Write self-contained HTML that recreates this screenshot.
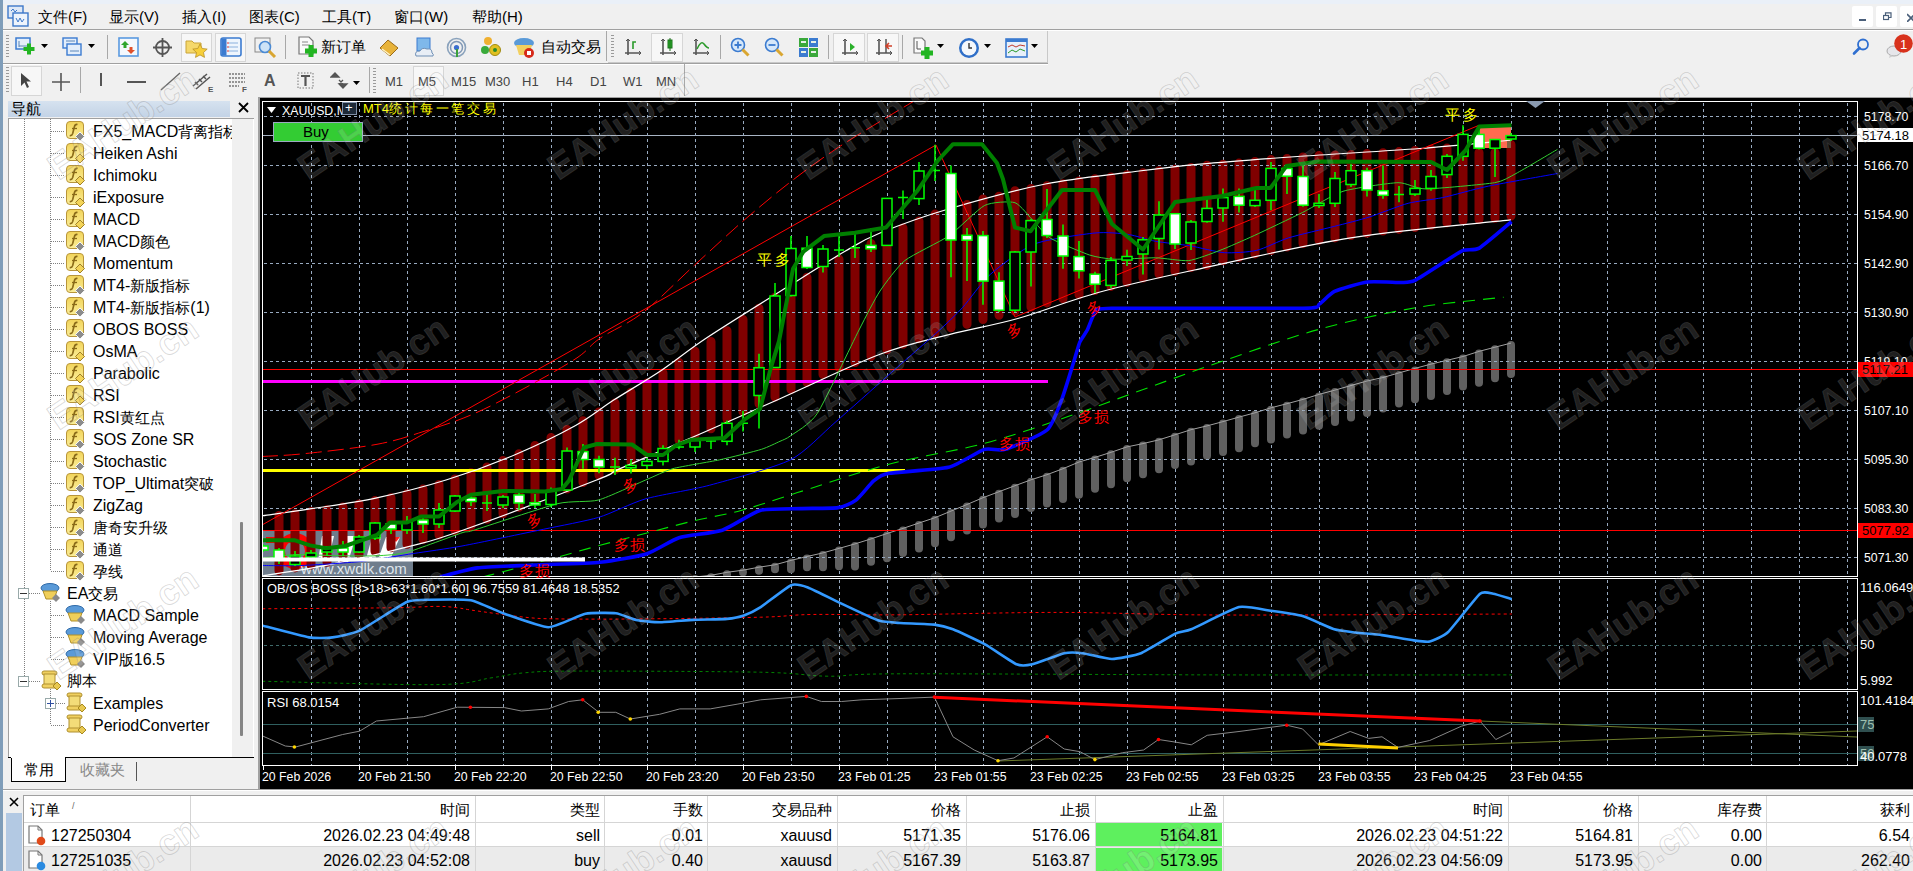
<!DOCTYPE html>
<html><head><meta charset="utf-8"><style>
*{margin:0;padding:0;box-sizing:border-box}
html,body{width:1913px;height:871px;overflow:hidden;background:#f0f0f0;font-family:"Liberation Sans", sans-serif;position:relative}
.a{position:absolute}
.t{position:absolute;white-space:nowrap;line-height:1}
</style></head>
<body>
<div class="a" style="left:0px;top:0px;width:1913px;height:4px;background:#eaf0f8"></div>
<div class="a" style="left:0px;top:0px;width:3px;height:871px;background:#7f9db9"></div>
<div class="a" style="left:3px;top:29px;width:1910px;height:1px;background:#a0a0a0"></div>
<div class="a" style="left:3px;top:30px;width:1910px;height:1px;background:#ffffff"></div>
<svg class="a" style="left:7px;top:5px" width="22" height="22" viewBox="0 0 22 22"><rect x="1" y="1" width="15" height="12" fill="#dfe9f7" stroke="#3d78c9" stroke-width="1.4"/><rect x="6" y="8" width="15" height="13" fill="#eef4fc" stroke="#3d78c9" stroke-width="1.4"/><path d="M4 6 l2 -2 l2 3 l2 -2 M9 13 l2 4 l2 -4 l2 4 l2-3" stroke="#3d78c9" stroke-width="1" fill="none"/></svg>
<div class="t" style="left:38px;top:9px;font-size:15px;color:#000;">文件(F)</div>
<div class="t" style="left:109px;top:9px;font-size:15px;color:#000;">显示(V)</div>
<div class="t" style="left:182px;top:9px;font-size:15px;color:#000;">插入(I)</div>
<div class="t" style="left:249px;top:9px;font-size:15px;color:#000;">图表(C)</div>
<div class="t" style="left:322px;top:9px;font-size:15px;color:#000;">工具(T)</div>
<div class="t" style="left:394px;top:9px;font-size:15px;color:#000;">窗口(W)</div>
<div class="t" style="left:472px;top:9px;font-size:15px;color:#000;">帮助(H)</div>
<div class="a" style="left:1852px;top:6px;width:21px;height:21px;background:#fff;border-radius:2px"></div>
<div class="a" style="left:1876px;top:6px;width:21px;height:21px;background:#fff;border-radius:2px"></div>
<div class="a" style="left:1900px;top:6px;width:21px;height:21px;background:#fff;border-radius:2px"></div>
<div class="a" style="left:1859px;top:19px;width:7px;height:2px;background:#4a5f7a"></div>
<svg class="a" style="left:1883px;top:12px" width="9" height="9"><rect x="0.5" y="3.5" width="5" height="4" fill="none" stroke="#4a5f7a" stroke-width="1.2"/><path d="M2.5 3.5 V0.8 H8 V5.5 H5.5" fill="none" stroke="#4a5f7a" stroke-width="1.2"/></svg>
<svg class="a" style="left:1907px;top:13px" width="6" height="9"><path d="M0 1 L8 9 M8 1 L0 9" stroke="#4a5f7a" stroke-width="1.6"/></svg>
<div class="a" style="left:3px;top:63px;width:1045px;height:1px;background:#a0a0a0"></div>
<div class="a" style="left:3px;top:64px;width:1045px;height:1px;background:#ffffff"></div>
<div class="a" style="left:260px;top:97px;width:1653px;height:1px;background:#a0a0a0"></div>
<div class="a" style="left:608px;top:31px;width:440px;height:32px;border:1px solid #c8c8c8;border-left:none;border-top:none"></div>
<div class="a" style="left:6px;top:35px;width:3px;height:24px;background:repeating-linear-gradient(#9a9a9a 0 1px,transparent 1px 3px)"></div>
<svg class="a" style="left:15px;top:37px" width="22" height="19" viewBox="0 0 22 19"><rect x="1" y="1" width="14" height="11" fill="#e3eefb" stroke="#3b7bd0" stroke-width="1.5"/><path d="M4 4 v6 M4 9 h8" stroke="#5b86b8" stroke-width="1"/><rect x="8.5" y="10.0" width="11" height="4" fill="#22b522"/><rect x="12.0" y="6.5" width="4" height="11" fill="#22b522"/></svg>
<svg class="a" style="left:41px;top:44px" width="8" height="5" viewBox="0 0 8 5"><path d="M0 0 H7 L3.5 4 Z" fill="#000"/></svg>
<svg class="a" style="left:62px;top:37px" width="22" height="20" viewBox="0 0 22 20"><rect x="1" y="1" width="14" height="10" fill="#e3eefb" stroke="#3b7bd0" stroke-width="1.4"/><rect x="5" y="7" width="14" height="11" fill="#e3eefb" stroke="#3b7bd0" stroke-width="1.4"/><path d="M4 4 h9 M8 14 h9" stroke="#5b86b8"/></svg>
<svg class="a" style="left:88px;top:44px" width="8" height="5" viewBox="0 0 8 5"><path d="M0 0 H7 L3.5 4 Z" fill="#000"/></svg>
<div class="a" style="left:107px;top:35px;width:1px;height:24px;background:#a8a8a8"></div>
<svg class="a" style="left:118px;top:37px" width="22" height="21" viewBox="0 0 22 21"><rect x="1" y="1" width="19" height="18" fill="#f4f8fd" stroke="#5a9ae0" stroke-width="1.6"/><path d="M7 4 l4 4 h-2.5 v3 h-3 v-3 H3 Z" fill="#2ea52e"/><path d="M13 17 l4 -4 h-2.5 v-3 h-3 v3 H9 Z" fill="#e0502a"/></svg>
<svg class="a" style="left:152px;top:37px" width="21" height="21" viewBox="0 0 21 21"><circle cx="10.5" cy="10.5" r="6.5" fill="none" stroke="#555" stroke-width="1.8"/><path d="M10.5 1 v19 M1 10.5 h19" stroke="#555" stroke-width="1.8"/></svg>
<div class="a" style="left:181px;top:33px;width:31px;height:29px;background:#f7f7f7;border:1px solid #d6d6d6"></div>
<svg class="a" style="left:185px;top:37px" width="23" height="21" viewBox="0 0 23 21"><path d="M1 4 h6 l2 2 h7 v10 H1 Z" fill="#f5d86b" stroke="#c9a43a"/><path d="M15 7 l2.2 4.5 5 .6 -3.7 3.4 1 4.9 -4.5 -2.5 -4.5 2.5 1 -4.9 -3.7 -3.4 5 -.6 Z" fill="#f7cf3a" stroke="#b8902a" stroke-width=".8"/></svg>
<div class="a" style="left:215px;top:33px;width:31px;height:29px;background:#f7f7f7;border:1px solid #d6d6d6"></div>
<svg class="a" style="left:220px;top:37px" width="22" height="20" viewBox="0 0 22 20"><rect x="1" y="1" width="20" height="18" rx="2" fill="#eef5fd" stroke="#3b7bd0" stroke-width="1.6"/><rect x="1.5" y="1.5" width="5" height="17" fill="#3b7bd0"/><path d="M9 6 h9 M9 10 h9 M9 14 h9" stroke="#8ab0dd"/><path d="M7 6 h2 M7 10 h2 M7 14 h2" stroke="#d33"/></svg>
<svg class="a" style="left:254px;top:37px" width="23" height="21" viewBox="0 0 23 21"><rect x="1" y="1" width="15" height="14" fill="#f0f0f0" stroke="#888"/><circle cx="11" cy="10" r="5.5" fill="#cde3f7" stroke="#4a8ad4" stroke-width="1.6"/><path d="M15 14 l6 6" stroke="#d9a631" stroke-width="3"/></svg>
<div class="a" style="left:285px;top:35px;width:1px;height:24px;background:#a8a8a8"></div>
<svg class="a" style="left:297px;top:36px" width="22" height="23" viewBox="0 0 22 23"><path d="M2 1 h10 l4 4 v13 H2 Z" fill="#fafafa" stroke="#777" stroke-width="1.2"/><path d="M5 6 h6 M5 9 h8" stroke="#888"/><rect x="8.0" y="12.5" width="12" height="5" fill="#22b522"/><rect x="11.5" y="9.0" width="5" height="12" fill="#22b522"/></svg>
<div class="t" style="left:321px;top:39px;font-size:15px;color:#000;">新订单</div>
<svg class="a" style="left:378px;top:38px" width="22" height="19" viewBox="0 0 22 19"><path d="M2 10 L10 2 L20 10 L12 18 Z" fill="#e8b33a" stroke="#9a6b1a"/><path d="M4 11 L12 17" stroke="#fff3c4" stroke-width="1.5"/></svg>
<svg class="a" style="left:413px;top:37px" width="22" height="21" viewBox="0 0 22 21"><rect x="4" y="1" width="13" height="13" fill="#7fb8ea" stroke="#3b7bd0"/><path d="M3 19 q-2 -5 4 -5 q2 -4 7 -2 q5 -1 5 4 q2 1 1 3 Z" fill="#e8eef6" stroke="#6e8fb5"/></svg>
<svg class="a" style="left:446px;top:37px" width="21" height="21" viewBox="0 0 21 21"><circle cx="10.5" cy="10.5" r="9" fill="none" stroke="#8aa2bc" stroke-width="1.6"/><circle cx="10.5" cy="10.5" r="6" fill="none" stroke="#7f97b5" stroke-width="1.5"/><circle cx="10.5" cy="10.5" r="2.6" fill="#3b6fcf"/><path d="M11 12 v8" stroke="#3aa03a" stroke-width="2"/></svg>
<svg class="a" style="left:480px;top:36px" width="22" height="23" viewBox="0 0 22 23"><circle cx="8" cy="5" r="4" fill="#f0b030"/><circle cx="5" cy="14" r="4" fill="#3aaa3a"/><circle cx="15" cy="14" r="5.5" fill="#e0c020" stroke="#a08a10"/><circle cx="15" cy="14" r="2" fill="#2a8a2a"/></svg>
<svg class="a" style="left:513px;top:36px" width="23" height="23" viewBox="0 0 23 23"><ellipse cx="11" cy="7" rx="10" ry="5" fill="#5a9ad8"/><path d="M3 9 h16 l-3 10 h-10 Z" fill="#f2d060"/><circle cx="16" cy="17" r="5" fill="#d62a1a"/><rect x="14" y="15" width="4" height="4" fill="#fff"/></svg>
<div class="t" style="left:541px;top:39px;font-size:15px;color:#000;">自动交易</div>
<div class="a" style="left:606px;top:31px;width:1px;height:30px;background:#a8a8a8"></div>
<div class="a" style="left:611px;top:35px;width:3px;height:24px;background:repeating-linear-gradient(#9a9a9a 0 1px,transparent 1px 3px)"></div>
<svg class="a" style="left:624px;top:37px" width="20" height="20" viewBox="0 0 20 20"><path d="M4 2 v16 M1 16 h16" stroke="#555" stroke-width="1.6"/><path d="M2 4 l2-2 2 2 M15 14 l2 2 -2 2" stroke="#555" fill="none"/><path d="M9 12 v-7 h3" stroke="#2a9a2a" stroke-width="1.6" fill="none"/></svg>
<div class="a" style="left:651px;top:33px;width:32px;height:29px;background:#f7f7f7;border:1px solid #d6d6d6"></div>
<svg class="a" style="left:659px;top:37px" width="20" height="20" viewBox="0 0 20 20"><path d="M4 2 v16 M1 16 h16" stroke="#555" stroke-width="1.6"/><path d="M2 4 l2-2 2 2 M15 14 l2 2 -2 2" stroke="#555" fill="none"/><rect x="9" y="3" width="4" height="8" fill="#2ab02a" stroke="#1a701a"/><path d="M11 1 v13" stroke="#1a701a"/></svg>
<svg class="a" style="left:692px;top:37px" width="20" height="20" viewBox="0 0 20 20"><path d="M4 2 v16 M1 16 h16" stroke="#555" stroke-width="1.6"/><path d="M2 4 l2-2 2 2 M15 14 l2 2 -2 2" stroke="#555" fill="none"/><path d="M5 12 q4 -9 7 -5 t5 4" stroke="#2a9a2a" stroke-width="1.5" fill="none"/></svg>
<div class="a" style="left:720px;top:35px;width:1px;height:24px;background:#a8a8a8"></div>
<svg class="a" style="left:730px;top:37px" width="21" height="21" viewBox="0 0 21 21"><circle cx="8" cy="8" r="6.5" fill="#d6e8fa" stroke="#3b7bd0" stroke-width="1.6"/><path d="M8 4.5 v7 M4.5 8 h7" stroke="#3b7bd0" stroke-width="1.8"/><path d="M12.5 12.5 l6 6" stroke="#d9a631" stroke-width="3"/></svg>
<svg class="a" style="left:764px;top:37px" width="21" height="21" viewBox="0 0 21 21"><circle cx="8" cy="8" r="6.5" fill="#d6e8fa" stroke="#3b7bd0" stroke-width="1.6"/><path d="M4.5 8 h7" stroke="#3b7bd0" stroke-width="1.8"/><path d="M12.5 12.5 l6 6" stroke="#d9a631" stroke-width="3"/></svg>
<svg class="a" style="left:798px;top:37px" width="22" height="21" viewBox="0 0 22 21"><rect x="1" y="1" width="9" height="9" fill="#3aa83a"/><rect x="11" y="1" width="9" height="9" fill="#3b7bd0"/><rect x="1" y="11" width="9" height="9" fill="#3b7bd0"/><rect x="11" y="11" width="9" height="9" fill="#3aa83a"/><path d="M3 5 h5 M13 5 h5 M3 15 h5 M13 15 h5" stroke="#e6f0e6" stroke-width="2"/></svg>
<div class="a" style="left:828px;top:35px;width:1px;height:24px;background:#a8a8a8"></div>
<div class="a" style="left:833px;top:33px;width:32px;height:29px;background:#f7f7f7;border:1px solid #d6d6d6"></div>
<svg class="a" style="left:841px;top:37px" width="20" height="20" viewBox="0 0 20 20"><path d="M4 2 v16 M1 16 h16" stroke="#555" stroke-width="1.6"/><path d="M2 4 l2-2 2 2 M15 14 l2 2 -2 2" stroke="#555" fill="none"/><path d="M9 6 l5 4 -5 4 Z" fill="#2ab02a"/></svg>
<div class="a" style="left:867px;top:33px;width:32px;height:29px;background:#f7f7f7;border:1px solid #d6d6d6"></div>
<svg class="a" style="left:875px;top:37px" width="20" height="20" viewBox="0 0 20 20"><path d="M4 2 v16 M1 16 h16" stroke="#555" stroke-width="1.6"/><path d="M2 4 l2-2 2 2 M15 14 l2 2 -2 2" stroke="#555" fill="none"/><path d="M11 2 v14" stroke="#555" stroke-width="1.5"/><path d="M17 9 h-5 M14 6 l-3 3 3 3" stroke="#d0402a" stroke-width="1.6" fill="none"/></svg>
<div class="a" style="left:902px;top:35px;width:1px;height:24px;background:#a8a8a8"></div>
<svg class="a" style="left:912px;top:37px" width="22" height="23" viewBox="0 0 22 23"><path d="M2 1 h8 l3 3 v12 H2 Z" fill="#fafafa" stroke="#777" stroke-width="1.2"/><path d="M5 4 v8 h4" stroke="#555" fill="none"/><rect x="9.0" y="13.5" width="12" height="5" fill="#22b522"/><rect x="12.5" y="10.0" width="5" height="12" fill="#22b522"/></svg>
<svg class="a" style="left:937px;top:44px" width="8" height="5" viewBox="0 0 8 5"><path d="M0 0 H7 L3.5 4 Z" fill="#000"/></svg>
<svg class="a" style="left:958px;top:37px" width="22" height="22" viewBox="0 0 22 22"><circle cx="11" cy="11" r="10" fill="#2f6fc8"/><circle cx="11" cy="11" r="7.5" fill="#f4f7fb"/><path d="M11 6 v5 h3" stroke="#333" stroke-width="1.4" fill="none"/></svg>
<svg class="a" style="left:984px;top:44px" width="8" height="5" viewBox="0 0 8 5"><path d="M0 0 H7 L3.5 4 Z" fill="#000"/></svg>
<svg class="a" style="left:1005px;top:38px" width="23" height="20" viewBox="0 0 23 20"><rect x="1" y="1" width="21" height="18" fill="#e8f0fa" stroke="#3b7bd0" stroke-width="1.6"/><rect x="1" y="1" width="21" height="3" fill="#3b7bd0"/><path d="M3 9 l4-2 4 2 4-2 5 1" stroke="#c0392b" fill="none"/><path d="M3 15 l4-3 4 2 4-3 5 2" stroke="#2a9a2a" fill="none"/></svg>
<svg class="a" style="left:1031px;top:44px" width="8" height="5" viewBox="0 0 8 5"><path d="M0 0 H7 L3.5 4 Z" fill="#000"/></svg>
<svg class="a" style="left:1852px;top:37px" width="20" height="20" viewBox="0 0 20 20"><circle cx="11" cy="7.5" r="5" fill="none" stroke="#2f6fd0" stroke-width="1.8"/><path d="M7.5 11 L2 16.5" stroke="#2f6fd0" stroke-width="2.6" stroke-linecap="round"/></svg>
<svg class="a" style="left:1885px;top:34px" width="28" height="26" viewBox="0 0 28 26"><ellipse cx="9" cy="17" rx="7" ry="5" fill="#e6e6ea" stroke="#aaa"/><path d="M5 21 l-1 3 4 -2" fill="#ccc"/><circle cx="18.5" cy="9.5" r="9.3" fill="#d8321c"/><text x="18.5" y="14.5" fill="#fff" font-size="13" font-family="Liberation Sans" text-anchor="middle">1</text></svg>
<div class="a" style="left:6px;top:67px;width:3px;height:26px;background:repeating-linear-gradient(#9a9a9a 0 1px,transparent 1px 3px)"></div>
<div class="a" style="left:11px;top:66px;width:31px;height:30px;background:#f7f7f7;border:1px solid #d6d6d6"></div>
<svg class="a" style="left:19px;top:72px" width="14" height="18" viewBox="0 0 14 18"><path d="M2 1 L2 14 L5.5 10.5 L8 16 L10 15 L7.5 9.5 L12 9.5 Z" fill="#444"/></svg>
<svg class="a" style="left:51px;top:72px" width="20" height="20" viewBox="0 0 20 20"><path d="M10 1 v18 M1 10 h18" stroke="#555" stroke-width="1.6"/></svg>
<div class="a" style="left:80px;top:67px;width:1px;height:26px;background:#a8a8a8"></div>
<div class="a" style="left:100px;top:73px;width:2px;height:13px;background:#555"></div>
<div class="a" style="left:127px;top:81px;width:19px;height:2px;background:#555"></div>
<svg class="a" style="left:160px;top:70px" width="25" height="22" viewBox="0 0 25 22"><path d="M1 20 L20 3" stroke="#666" stroke-width="1.3"/></svg>
<svg class="a" style="left:190px;top:70px" width="26" height="23" viewBox="0 0 26 23"><path d="M3 16 l14 -12 M6 19 l14 -12 M5 12 l3 3 M9 9 l3 3 M13 6 l3 3" stroke="#555" stroke-width="1.5"/><text x="18" y="22" font-size="8" font-weight="bold" fill="#555" font-family="Liberation Sans">E</text></svg>
<svg class="a" style="left:228px;top:72px" width="22" height="20" viewBox="0 0 22 20"><path d="M1 2 h16 M1 6 h16 M1 10 h16 M1 14 h10" stroke="#777" stroke-dasharray="2 1" stroke-width="1.5"/><text x="14" y="20" font-size="8" font-weight="bold" fill="#555" font-family="Liberation Sans">F</text></svg>
<div class="t" style="left:264px;top:73px;font-size:16px;color:#555;font-weight:bold">A</div>
<svg class="a" style="left:297px;top:72px" width="18" height="18" viewBox="0 0 18 18"><rect x="1" y="1" width="15" height="15" fill="none" stroke="#777" stroke-dasharray="1.5 1.5"/><path d="M4 4 h9 M8.5 4 v10" stroke="#555" stroke-width="2.2"/></svg>
<svg class="a" style="left:330px;top:72px" width="20" height="18" viewBox="0 0 20 18"><path d="M5 1 l4 4 h-8 Z M9 8 l4 4 M13 8 l-4 4 M13 16 l4 -4 h-8 Z" fill="#555" stroke="#555" stroke-width="1.3"/></svg>
<svg class="a" style="left:353px;top:81px" width="8" height="5" viewBox="0 0 8 5"><path d="M0 0 H7 L3.5 4 Z" fill="#000"/></svg>
<div class="a" style="left:369px;top:67px;width:1px;height:26px;background:#a8a8a8"></div>
<div class="a" style="left:373px;top:68px;width:3px;height:26px;background:repeating-linear-gradient(#9a9a9a 0 1px,transparent 1px 3px)"></div>
<div class="a" style="left:413px;top:66px;width:31px;height:30px;background:#f7f7f7;border:1px solid #d6d6d6"></div>
<div class="t" style="left:385px;top:75px;font-size:13px;color:#444;">M1</div>
<div class="t" style="left:418px;top:75px;font-size:13px;color:#444;">M5</div>
<div class="t" style="left:451px;top:75px;font-size:13px;color:#444;">M15</div>
<div class="t" style="left:485px;top:75px;font-size:13px;color:#444;">M30</div>
<div class="t" style="left:522px;top:75px;font-size:13px;color:#444;">H1</div>
<div class="t" style="left:556px;top:75px;font-size:13px;color:#444;">H4</div>
<div class="t" style="left:590px;top:75px;font-size:13px;color:#444;">D1</div>
<div class="t" style="left:623px;top:75px;font-size:13px;color:#444;">W1</div>
<div class="t" style="left:656px;top:75px;font-size:13px;color:#444;">MN</div>
<div class="a" style="left:684px;top:64px;width:1px;height:32px;background:#a8a8a8"></div>
<div class="a" style="left:3px;top:97px;width:257px;height:693px;background:#f0f0f0"></div>
<div class="a" style="left:8px;top:101px;width:222px;height:16px;background:linear-gradient(#d6e2ef,#c3d3e6)"></div>
<div class="t" style="left:11px;top:101px;font-size:15px;color:#000;">导航</div>
<svg class="a" style="left:238px;top:102px" width="11" height="11" viewBox="0 0 11 11"><path d="M1 1 L10 10 M10 1 L1 10" stroke="#000" stroke-width="1.8"/></svg>
<div class="a" style="left:8px;top:118px;width:246px;height:639px;background:#fff;border-top:1px solid #a0a0a0;border-left:1px solid #a0a0a0"></div>
<div class="a" style="left:24px;top:119px;width:1px;height:475px;background:repeating-linear-gradient(#808080 0 1px,transparent 1px 2px)"></div>
<div class="a" style="left:50px;top:119px;width:1px;height:452px;background:repeating-linear-gradient(#808080 0 1px,transparent 1px 2px)"></div>
<div class="a" style="left:51px;top:131px;width:14px;height:1px;background:repeating-linear-gradient(90deg,#808080 0 1px,transparent 1px 2px)"></div>
<svg class="a" style="left:65px;top:121px" width="21" height="21" viewBox="0 0 21 21"><defs><linearGradient id="yg" x1="0" y1="0" x2="0" y2="1"><stop offset="0" stop-color="#f2d45a"/><stop offset="1" stop-color="#fbee98"/></linearGradient></defs><rect x="1.5" y="0.5" width="17" height="17" rx="3.5" fill="url(#yg)" stroke="#b8953a"/><path d="M12.5 3.5 q-2.5 -0.5 -3.2 2.5 l-1.6 6.5 q-0.8 2.5 -3 2" fill="none" stroke="#8a6a18" stroke-width="1.6"/><path d="M7 7.5 h5" stroke="#8a6a18" stroke-width="1.3"/><path d="M15 11 l4.5 4.5 -4.5 4.5 -4.5 -4.5 Z" fill="#8c8c8c" stroke="#f4f4f4" stroke-width="1"/></svg>
<div class="t" style="left:93px;top:124px;font-size:16px;color:#000;">FX5_MACD<span style="font-size:15px">背离指标</span></div>
<div class="a" style="left:51px;top:153px;width:14px;height:1px;background:repeating-linear-gradient(90deg,#808080 0 1px,transparent 1px 2px)"></div>
<svg class="a" style="left:65px;top:143px" width="21" height="21" viewBox="0 0 21 21"><defs><linearGradient id="yg" x1="0" y1="0" x2="0" y2="1"><stop offset="0" stop-color="#f2d45a"/><stop offset="1" stop-color="#fbee98"/></linearGradient></defs><rect x="1.5" y="0.5" width="17" height="17" rx="3.5" fill="url(#yg)" stroke="#b8953a"/><path d="M12.5 3.5 q-2.5 -0.5 -3.2 2.5 l-1.6 6.5 q-0.8 2.5 -3 2" fill="none" stroke="#8a6a18" stroke-width="1.6"/><path d="M7 7.5 h5" stroke="#8a6a18" stroke-width="1.3"/><path d="M15 11 l4.5 4.5 -4.5 4.5 -4.5 -4.5 Z" fill="#f3d458" stroke="#a08028" stroke-width="1"/></svg>
<div class="t" style="left:93px;top:146px;font-size:16px;color:#000;">Heiken Ashi</div>
<div class="a" style="left:51px;top:175px;width:14px;height:1px;background:repeating-linear-gradient(90deg,#808080 0 1px,transparent 1px 2px)"></div>
<svg class="a" style="left:65px;top:165px" width="21" height="21" viewBox="0 0 21 21"><defs><linearGradient id="yg" x1="0" y1="0" x2="0" y2="1"><stop offset="0" stop-color="#f2d45a"/><stop offset="1" stop-color="#fbee98"/></linearGradient></defs><rect x="1.5" y="0.5" width="17" height="17" rx="3.5" fill="url(#yg)" stroke="#b8953a"/><path d="M12.5 3.5 q-2.5 -0.5 -3.2 2.5 l-1.6 6.5 q-0.8 2.5 -3 2" fill="none" stroke="#8a6a18" stroke-width="1.6"/><path d="M7 7.5 h5" stroke="#8a6a18" stroke-width="1.3"/><path d="M15 11 l4.5 4.5 -4.5 4.5 -4.5 -4.5 Z" fill="#f3d458" stroke="#a08028" stroke-width="1"/></svg>
<div class="t" style="left:93px;top:168px;font-size:16px;color:#000;">Ichimoku</div>
<div class="a" style="left:51px;top:197px;width:14px;height:1px;background:repeating-linear-gradient(90deg,#808080 0 1px,transparent 1px 2px)"></div>
<svg class="a" style="left:65px;top:187px" width="21" height="21" viewBox="0 0 21 21"><defs><linearGradient id="yg" x1="0" y1="0" x2="0" y2="1"><stop offset="0" stop-color="#f2d45a"/><stop offset="1" stop-color="#fbee98"/></linearGradient></defs><rect x="1.5" y="0.5" width="17" height="17" rx="3.5" fill="url(#yg)" stroke="#b8953a"/><path d="M12.5 3.5 q-2.5 -0.5 -3.2 2.5 l-1.6 6.5 q-0.8 2.5 -3 2" fill="none" stroke="#8a6a18" stroke-width="1.6"/><path d="M7 7.5 h5" stroke="#8a6a18" stroke-width="1.3"/><path d="M15 11 l4.5 4.5 -4.5 4.5 -4.5 -4.5 Z" fill="#f3d458" stroke="#a08028" stroke-width="1"/></svg>
<div class="t" style="left:93px;top:190px;font-size:16px;color:#000;">iExposure</div>
<div class="a" style="left:51px;top:219px;width:14px;height:1px;background:repeating-linear-gradient(90deg,#808080 0 1px,transparent 1px 2px)"></div>
<svg class="a" style="left:65px;top:209px" width="21" height="21" viewBox="0 0 21 21"><defs><linearGradient id="yg" x1="0" y1="0" x2="0" y2="1"><stop offset="0" stop-color="#f2d45a"/><stop offset="1" stop-color="#fbee98"/></linearGradient></defs><rect x="1.5" y="0.5" width="17" height="17" rx="3.5" fill="url(#yg)" stroke="#b8953a"/><path d="M12.5 3.5 q-2.5 -0.5 -3.2 2.5 l-1.6 6.5 q-0.8 2.5 -3 2" fill="none" stroke="#8a6a18" stroke-width="1.6"/><path d="M7 7.5 h5" stroke="#8a6a18" stroke-width="1.3"/><path d="M15 11 l4.5 4.5 -4.5 4.5 -4.5 -4.5 Z" fill="#f3d458" stroke="#a08028" stroke-width="1"/></svg>
<div class="t" style="left:93px;top:212px;font-size:16px;color:#000;">MACD</div>
<div class="a" style="left:51px;top:241px;width:14px;height:1px;background:repeating-linear-gradient(90deg,#808080 0 1px,transparent 1px 2px)"></div>
<svg class="a" style="left:65px;top:231px" width="21" height="21" viewBox="0 0 21 21"><defs><linearGradient id="yg" x1="0" y1="0" x2="0" y2="1"><stop offset="0" stop-color="#f2d45a"/><stop offset="1" stop-color="#fbee98"/></linearGradient></defs><rect x="1.5" y="0.5" width="17" height="17" rx="3.5" fill="url(#yg)" stroke="#b8953a"/><path d="M12.5 3.5 q-2.5 -0.5 -3.2 2.5 l-1.6 6.5 q-0.8 2.5 -3 2" fill="none" stroke="#8a6a18" stroke-width="1.6"/><path d="M7 7.5 h5" stroke="#8a6a18" stroke-width="1.3"/><path d="M15 11 l4.5 4.5 -4.5 4.5 -4.5 -4.5 Z" fill="#8c8c8c" stroke="#f4f4f4" stroke-width="1"/></svg>
<div class="t" style="left:93px;top:234px;font-size:16px;color:#000;">MACD<span style="font-size:15px">颜色</span></div>
<div class="a" style="left:51px;top:263px;width:14px;height:1px;background:repeating-linear-gradient(90deg,#808080 0 1px,transparent 1px 2px)"></div>
<svg class="a" style="left:65px;top:253px" width="21" height="21" viewBox="0 0 21 21"><defs><linearGradient id="yg" x1="0" y1="0" x2="0" y2="1"><stop offset="0" stop-color="#f2d45a"/><stop offset="1" stop-color="#fbee98"/></linearGradient></defs><rect x="1.5" y="0.5" width="17" height="17" rx="3.5" fill="url(#yg)" stroke="#b8953a"/><path d="M12.5 3.5 q-2.5 -0.5 -3.2 2.5 l-1.6 6.5 q-0.8 2.5 -3 2" fill="none" stroke="#8a6a18" stroke-width="1.6"/><path d="M7 7.5 h5" stroke="#8a6a18" stroke-width="1.3"/><path d="M15 11 l4.5 4.5 -4.5 4.5 -4.5 -4.5 Z" fill="#f3d458" stroke="#a08028" stroke-width="1"/></svg>
<div class="t" style="left:93px;top:256px;font-size:16px;color:#000;">Momentum</div>
<div class="a" style="left:51px;top:285px;width:14px;height:1px;background:repeating-linear-gradient(90deg,#808080 0 1px,transparent 1px 2px)"></div>
<svg class="a" style="left:65px;top:275px" width="21" height="21" viewBox="0 0 21 21"><defs><linearGradient id="yg" x1="0" y1="0" x2="0" y2="1"><stop offset="0" stop-color="#f2d45a"/><stop offset="1" stop-color="#fbee98"/></linearGradient></defs><rect x="1.5" y="0.5" width="17" height="17" rx="3.5" fill="url(#yg)" stroke="#b8953a"/><path d="M12.5 3.5 q-2.5 -0.5 -3.2 2.5 l-1.6 6.5 q-0.8 2.5 -3 2" fill="none" stroke="#8a6a18" stroke-width="1.6"/><path d="M7 7.5 h5" stroke="#8a6a18" stroke-width="1.3"/><path d="M15 11 l4.5 4.5 -4.5 4.5 -4.5 -4.5 Z" fill="#8c8c8c" stroke="#f4f4f4" stroke-width="1"/></svg>
<div class="t" style="left:93px;top:278px;font-size:16px;color:#000;">MT4-<span style="font-size:15px">新版指标</span></div>
<div class="a" style="left:51px;top:307px;width:14px;height:1px;background:repeating-linear-gradient(90deg,#808080 0 1px,transparent 1px 2px)"></div>
<svg class="a" style="left:65px;top:297px" width="21" height="21" viewBox="0 0 21 21"><defs><linearGradient id="yg" x1="0" y1="0" x2="0" y2="1"><stop offset="0" stop-color="#f2d45a"/><stop offset="1" stop-color="#fbee98"/></linearGradient></defs><rect x="1.5" y="0.5" width="17" height="17" rx="3.5" fill="url(#yg)" stroke="#b8953a"/><path d="M12.5 3.5 q-2.5 -0.5 -3.2 2.5 l-1.6 6.5 q-0.8 2.5 -3 2" fill="none" stroke="#8a6a18" stroke-width="1.6"/><path d="M7 7.5 h5" stroke="#8a6a18" stroke-width="1.3"/><path d="M15 11 l4.5 4.5 -4.5 4.5 -4.5 -4.5 Z" fill="#8c8c8c" stroke="#f4f4f4" stroke-width="1"/></svg>
<div class="t" style="left:93px;top:300px;font-size:16px;color:#000;">MT4-<span style="font-size:15px">新版指标</span>(1)</div>
<div class="a" style="left:51px;top:329px;width:14px;height:1px;background:repeating-linear-gradient(90deg,#808080 0 1px,transparent 1px 2px)"></div>
<svg class="a" style="left:65px;top:319px" width="21" height="21" viewBox="0 0 21 21"><defs><linearGradient id="yg" x1="0" y1="0" x2="0" y2="1"><stop offset="0" stop-color="#f2d45a"/><stop offset="1" stop-color="#fbee98"/></linearGradient></defs><rect x="1.5" y="0.5" width="17" height="17" rx="3.5" fill="url(#yg)" stroke="#b8953a"/><path d="M12.5 3.5 q-2.5 -0.5 -3.2 2.5 l-1.6 6.5 q-0.8 2.5 -3 2" fill="none" stroke="#8a6a18" stroke-width="1.6"/><path d="M7 7.5 h5" stroke="#8a6a18" stroke-width="1.3"/><path d="M15 11 l4.5 4.5 -4.5 4.5 -4.5 -4.5 Z" fill="#8c8c8c" stroke="#f4f4f4" stroke-width="1"/></svg>
<div class="t" style="left:93px;top:322px;font-size:16px;color:#000;">OBOS BOSS</div>
<div class="a" style="left:51px;top:351px;width:14px;height:1px;background:repeating-linear-gradient(90deg,#808080 0 1px,transparent 1px 2px)"></div>
<svg class="a" style="left:65px;top:341px" width="21" height="21" viewBox="0 0 21 21"><defs><linearGradient id="yg" x1="0" y1="0" x2="0" y2="1"><stop offset="0" stop-color="#f2d45a"/><stop offset="1" stop-color="#fbee98"/></linearGradient></defs><rect x="1.5" y="0.5" width="17" height="17" rx="3.5" fill="url(#yg)" stroke="#b8953a"/><path d="M12.5 3.5 q-2.5 -0.5 -3.2 2.5 l-1.6 6.5 q-0.8 2.5 -3 2" fill="none" stroke="#8a6a18" stroke-width="1.6"/><path d="M7 7.5 h5" stroke="#8a6a18" stroke-width="1.3"/><path d="M15 11 l4.5 4.5 -4.5 4.5 -4.5 -4.5 Z" fill="#f3d458" stroke="#a08028" stroke-width="1"/></svg>
<div class="t" style="left:93px;top:344px;font-size:16px;color:#000;">OsMA</div>
<div class="a" style="left:51px;top:373px;width:14px;height:1px;background:repeating-linear-gradient(90deg,#808080 0 1px,transparent 1px 2px)"></div>
<svg class="a" style="left:65px;top:363px" width="21" height="21" viewBox="0 0 21 21"><defs><linearGradient id="yg" x1="0" y1="0" x2="0" y2="1"><stop offset="0" stop-color="#f2d45a"/><stop offset="1" stop-color="#fbee98"/></linearGradient></defs><rect x="1.5" y="0.5" width="17" height="17" rx="3.5" fill="url(#yg)" stroke="#b8953a"/><path d="M12.5 3.5 q-2.5 -0.5 -3.2 2.5 l-1.6 6.5 q-0.8 2.5 -3 2" fill="none" stroke="#8a6a18" stroke-width="1.6"/><path d="M7 7.5 h5" stroke="#8a6a18" stroke-width="1.3"/><path d="M15 11 l4.5 4.5 -4.5 4.5 -4.5 -4.5 Z" fill="#f3d458" stroke="#a08028" stroke-width="1"/></svg>
<div class="t" style="left:93px;top:366px;font-size:16px;color:#000;">Parabolic</div>
<div class="a" style="left:51px;top:395px;width:14px;height:1px;background:repeating-linear-gradient(90deg,#808080 0 1px,transparent 1px 2px)"></div>
<svg class="a" style="left:65px;top:385px" width="21" height="21" viewBox="0 0 21 21"><defs><linearGradient id="yg" x1="0" y1="0" x2="0" y2="1"><stop offset="0" stop-color="#f2d45a"/><stop offset="1" stop-color="#fbee98"/></linearGradient></defs><rect x="1.5" y="0.5" width="17" height="17" rx="3.5" fill="url(#yg)" stroke="#b8953a"/><path d="M12.5 3.5 q-2.5 -0.5 -3.2 2.5 l-1.6 6.5 q-0.8 2.5 -3 2" fill="none" stroke="#8a6a18" stroke-width="1.6"/><path d="M7 7.5 h5" stroke="#8a6a18" stroke-width="1.3"/><path d="M15 11 l4.5 4.5 -4.5 4.5 -4.5 -4.5 Z" fill="#f3d458" stroke="#a08028" stroke-width="1"/></svg>
<div class="t" style="left:93px;top:388px;font-size:16px;color:#000;">RSI</div>
<div class="a" style="left:51px;top:417px;width:14px;height:1px;background:repeating-linear-gradient(90deg,#808080 0 1px,transparent 1px 2px)"></div>
<svg class="a" style="left:65px;top:407px" width="21" height="21" viewBox="0 0 21 21"><defs><linearGradient id="yg" x1="0" y1="0" x2="0" y2="1"><stop offset="0" stop-color="#f2d45a"/><stop offset="1" stop-color="#fbee98"/></linearGradient></defs><rect x="1.5" y="0.5" width="17" height="17" rx="3.5" fill="url(#yg)" stroke="#b8953a"/><path d="M12.5 3.5 q-2.5 -0.5 -3.2 2.5 l-1.6 6.5 q-0.8 2.5 -3 2" fill="none" stroke="#8a6a18" stroke-width="1.6"/><path d="M7 7.5 h5" stroke="#8a6a18" stroke-width="1.3"/><path d="M15 11 l4.5 4.5 -4.5 4.5 -4.5 -4.5 Z" fill="#8c8c8c" stroke="#f4f4f4" stroke-width="1"/></svg>
<div class="t" style="left:93px;top:410px;font-size:16px;color:#000;">RSI<span style="font-size:15px">黄红点</span></div>
<div class="a" style="left:51px;top:439px;width:14px;height:1px;background:repeating-linear-gradient(90deg,#808080 0 1px,transparent 1px 2px)"></div>
<svg class="a" style="left:65px;top:429px" width="21" height="21" viewBox="0 0 21 21"><defs><linearGradient id="yg" x1="0" y1="0" x2="0" y2="1"><stop offset="0" stop-color="#f2d45a"/><stop offset="1" stop-color="#fbee98"/></linearGradient></defs><rect x="1.5" y="0.5" width="17" height="17" rx="3.5" fill="url(#yg)" stroke="#b8953a"/><path d="M12.5 3.5 q-2.5 -0.5 -3.2 2.5 l-1.6 6.5 q-0.8 2.5 -3 2" fill="none" stroke="#8a6a18" stroke-width="1.6"/><path d="M7 7.5 h5" stroke="#8a6a18" stroke-width="1.3"/><path d="M15 11 l4.5 4.5 -4.5 4.5 -4.5 -4.5 Z" fill="#8c8c8c" stroke="#f4f4f4" stroke-width="1"/></svg>
<div class="t" style="left:93px;top:432px;font-size:16px;color:#000;">SOS Zone SR</div>
<div class="a" style="left:51px;top:461px;width:14px;height:1px;background:repeating-linear-gradient(90deg,#808080 0 1px,transparent 1px 2px)"></div>
<svg class="a" style="left:65px;top:451px" width="21" height="21" viewBox="0 0 21 21"><defs><linearGradient id="yg" x1="0" y1="0" x2="0" y2="1"><stop offset="0" stop-color="#f2d45a"/><stop offset="1" stop-color="#fbee98"/></linearGradient></defs><rect x="1.5" y="0.5" width="17" height="17" rx="3.5" fill="url(#yg)" stroke="#b8953a"/><path d="M12.5 3.5 q-2.5 -0.5 -3.2 2.5 l-1.6 6.5 q-0.8 2.5 -3 2" fill="none" stroke="#8a6a18" stroke-width="1.6"/><path d="M7 7.5 h5" stroke="#8a6a18" stroke-width="1.3"/><path d="M15 11 l4.5 4.5 -4.5 4.5 -4.5 -4.5 Z" fill="#8c8c8c" stroke="#f4f4f4" stroke-width="1"/></svg>
<div class="t" style="left:93px;top:454px;font-size:16px;color:#000;">Stochastic</div>
<div class="a" style="left:51px;top:483px;width:14px;height:1px;background:repeating-linear-gradient(90deg,#808080 0 1px,transparent 1px 2px)"></div>
<svg class="a" style="left:65px;top:473px" width="21" height="21" viewBox="0 0 21 21"><defs><linearGradient id="yg" x1="0" y1="0" x2="0" y2="1"><stop offset="0" stop-color="#f2d45a"/><stop offset="1" stop-color="#fbee98"/></linearGradient></defs><rect x="1.5" y="0.5" width="17" height="17" rx="3.5" fill="url(#yg)" stroke="#b8953a"/><path d="M12.5 3.5 q-2.5 -0.5 -3.2 2.5 l-1.6 6.5 q-0.8 2.5 -3 2" fill="none" stroke="#8a6a18" stroke-width="1.6"/><path d="M7 7.5 h5" stroke="#8a6a18" stroke-width="1.3"/><path d="M15 11 l4.5 4.5 -4.5 4.5 -4.5 -4.5 Z" fill="#8c8c8c" stroke="#f4f4f4" stroke-width="1"/></svg>
<div class="t" style="left:93px;top:476px;font-size:16px;color:#000;">TOP_Ultimat<span style="font-size:15px">突破</span></div>
<div class="a" style="left:51px;top:505px;width:14px;height:1px;background:repeating-linear-gradient(90deg,#808080 0 1px,transparent 1px 2px)"></div>
<svg class="a" style="left:65px;top:495px" width="21" height="21" viewBox="0 0 21 21"><defs><linearGradient id="yg" x1="0" y1="0" x2="0" y2="1"><stop offset="0" stop-color="#f2d45a"/><stop offset="1" stop-color="#fbee98"/></linearGradient></defs><rect x="1.5" y="0.5" width="17" height="17" rx="3.5" fill="url(#yg)" stroke="#b8953a"/><path d="M12.5 3.5 q-2.5 -0.5 -3.2 2.5 l-1.6 6.5 q-0.8 2.5 -3 2" fill="none" stroke="#8a6a18" stroke-width="1.6"/><path d="M7 7.5 h5" stroke="#8a6a18" stroke-width="1.3"/><path d="M15 11 l4.5 4.5 -4.5 4.5 -4.5 -4.5 Z" fill="#8c8c8c" stroke="#f4f4f4" stroke-width="1"/></svg>
<div class="t" style="left:93px;top:498px;font-size:16px;color:#000;">ZigZag</div>
<div class="a" style="left:51px;top:527px;width:14px;height:1px;background:repeating-linear-gradient(90deg,#808080 0 1px,transparent 1px 2px)"></div>
<svg class="a" style="left:65px;top:517px" width="21" height="21" viewBox="0 0 21 21"><defs><linearGradient id="yg" x1="0" y1="0" x2="0" y2="1"><stop offset="0" stop-color="#f2d45a"/><stop offset="1" stop-color="#fbee98"/></linearGradient></defs><rect x="1.5" y="0.5" width="17" height="17" rx="3.5" fill="url(#yg)" stroke="#b8953a"/><path d="M12.5 3.5 q-2.5 -0.5 -3.2 2.5 l-1.6 6.5 q-0.8 2.5 -3 2" fill="none" stroke="#8a6a18" stroke-width="1.6"/><path d="M7 7.5 h5" stroke="#8a6a18" stroke-width="1.3"/><path d="M15 11 l4.5 4.5 -4.5 4.5 -4.5 -4.5 Z" fill="#8c8c8c" stroke="#f4f4f4" stroke-width="1"/></svg>
<div class="t" style="left:93px;top:520px;font-size:16px;color:#000;"><span style="font-size:15px">唐奇安升级</span></div>
<div class="a" style="left:51px;top:549px;width:14px;height:1px;background:repeating-linear-gradient(90deg,#808080 0 1px,transparent 1px 2px)"></div>
<svg class="a" style="left:65px;top:539px" width="21" height="21" viewBox="0 0 21 21"><defs><linearGradient id="yg" x1="0" y1="0" x2="0" y2="1"><stop offset="0" stop-color="#f2d45a"/><stop offset="1" stop-color="#fbee98"/></linearGradient></defs><rect x="1.5" y="0.5" width="17" height="17" rx="3.5" fill="url(#yg)" stroke="#b8953a"/><path d="M12.5 3.5 q-2.5 -0.5 -3.2 2.5 l-1.6 6.5 q-0.8 2.5 -3 2" fill="none" stroke="#8a6a18" stroke-width="1.6"/><path d="M7 7.5 h5" stroke="#8a6a18" stroke-width="1.3"/><path d="M15 11 l4.5 4.5 -4.5 4.5 -4.5 -4.5 Z" fill="#8c8c8c" stroke="#f4f4f4" stroke-width="1"/></svg>
<div class="t" style="left:93px;top:542px;font-size:16px;color:#000;"><span style="font-size:15px">通道</span></div>
<div class="a" style="left:51px;top:571px;width:14px;height:1px;background:repeating-linear-gradient(90deg,#808080 0 1px,transparent 1px 2px)"></div>
<svg class="a" style="left:65px;top:561px" width="21" height="21" viewBox="0 0 21 21"><defs><linearGradient id="yg" x1="0" y1="0" x2="0" y2="1"><stop offset="0" stop-color="#f2d45a"/><stop offset="1" stop-color="#fbee98"/></linearGradient></defs><rect x="1.5" y="0.5" width="17" height="17" rx="3.5" fill="url(#yg)" stroke="#b8953a"/><path d="M12.5 3.5 q-2.5 -0.5 -3.2 2.5 l-1.6 6.5 q-0.8 2.5 -3 2" fill="none" stroke="#8a6a18" stroke-width="1.6"/><path d="M7 7.5 h5" stroke="#8a6a18" stroke-width="1.3"/><path d="M15 11 l4.5 4.5 -4.5 4.5 -4.5 -4.5 Z" fill="#8c8c8c" stroke="#f4f4f4" stroke-width="1"/></svg>
<div class="t" style="left:93px;top:564px;font-size:16px;color:#000;"><span style="font-size:15px">孕线</span></div>
<div class="a" style="left:18px;top:588px;width:11px;height:11px;background:#fff;border:1px solid #9aa"></div>
<div class="a" style="left:20px;top:593px;width:7px;height:1px;background:#333"></div>
<svg class="a" style="left:40px;top:582px" width="24" height="20" viewBox="0 0 24 20"><ellipse cx="10" cy="6" rx="9" ry="4.5" fill="#5a9ad8" stroke="#2f6aa8"/><path d="M3 9 h14 l-3 8 h-8 Z" fill="#f0cf5a" stroke="#b0902a"/><path d="M16 12 l4 4 -4 4 -4 -4 Z" fill="#8a8a8a"/></svg>
<div class="t" style="left:67px;top:586px;font-size:16px;color:#000;">EA<span style="font-size:15px">交易</span></div>
<div class="a" style="left:50px;top:601px;width:1px;height:58px;background:repeating-linear-gradient(#808080 0 1px,transparent 1px 2px)"></div>
<div class="a" style="left:51px;top:615px;width:14px;height:1px;background:repeating-linear-gradient(90deg,#808080 0 1px,transparent 1px 2px)"></div>
<svg class="a" style="left:65px;top:604px" width="24" height="20" viewBox="0 0 24 20"><ellipse cx="10" cy="6" rx="9" ry="4.5" fill="#5a9ad8" stroke="#2f6aa8"/><path d="M3 9 h14 l-3 8 h-8 Z" fill="#f0cf5a" stroke="#b0902a"/><path d="M16 12 l4 4 -4 4 -4 -4 Z" fill="#8a8a8a"/></svg>
<div class="t" style="left:93px;top:608px;font-size:16px;color:#000;">MACD Sample</div>
<div class="a" style="left:51px;top:637px;width:14px;height:1px;background:repeating-linear-gradient(90deg,#808080 0 1px,transparent 1px 2px)"></div>
<svg class="a" style="left:65px;top:626px" width="24" height="20" viewBox="0 0 24 20"><ellipse cx="10" cy="6" rx="9" ry="4.5" fill="#5a9ad8" stroke="#2f6aa8"/><path d="M3 9 h14 l-3 8 h-8 Z" fill="#f0cf5a" stroke="#b0902a"/><path d="M16 12 l4 4 -4 4 -4 -4 Z" fill="#8a8a8a"/></svg>
<div class="t" style="left:93px;top:630px;font-size:16px;color:#000;">Moving Average</div>
<div class="a" style="left:51px;top:659px;width:14px;height:1px;background:repeating-linear-gradient(90deg,#808080 0 1px,transparent 1px 2px)"></div>
<svg class="a" style="left:65px;top:648px" width="24" height="20" viewBox="0 0 24 20"><ellipse cx="10" cy="6" rx="9" ry="4.5" fill="#5a9ad8" stroke="#2f6aa8"/><path d="M3 9 h14 l-3 8 h-8 Z" fill="#f0cf5a" stroke="#b0902a"/><path d="M16 12 l4 4 -4 4 -4 -4 Z" fill="#8a8a8a"/></svg>
<div class="t" style="left:93px;top:652px;font-size:16px;color:#000;">VIP<span style="font-size:15px">版</span>16.5</div>
<div class="a" style="left:24px;top:599px;width:1px;height:82px;background:repeating-linear-gradient(#808080 0 1px,transparent 1px 2px)"></div>
<div class="a" style="left:18px;top:676px;width:11px;height:11px;background:#fff;border:1px solid #9aa"></div>
<div class="a" style="left:20px;top:681px;width:7px;height:1px;background:#333"></div>
<div class="a" style="left:29px;top:681px;width:11px;height:1px;background:repeating-linear-gradient(90deg,#808080 0 1px,transparent 1px 2px)"></div>
<div class="a" style="left:29px;top:593px;width:11px;height:1px;background:repeating-linear-gradient(90deg,#808080 0 1px,transparent 1px 2px)"></div>
<svg class="a" style="left:40px;top:670px" width="24" height="22" viewBox="0 0 24 22"><rect x="2" y="1" width="15" height="4" rx="2" fill="#f0d060" stroke="#b09030"/><rect x="4" y="4" width="11" height="12" fill="#f3dc78" stroke="#b09030"/><rect x="2" y="14" width="15" height="4" rx="2" fill="#f0d060" stroke="#b09030"/><path d="M17 12 l4 4 -4 4 -4 -4 Z" fill="#e8c850" stroke="#a88a20"/></svg>
<div class="t" style="left:67px;top:673px;font-size:15px;color:#000;">脚本</div>
<div class="a" style="left:50px;top:689px;width:1px;height:36px;background:repeating-linear-gradient(#808080 0 1px,transparent 1px 2px)"></div>
<div class="a" style="left:45px;top:698px;width:11px;height:11px;background:#fff;border:1px solid #9aa"></div>
<div class="a" style="left:47px;top:703px;width:7px;height:1px;background:#3050a0"></div>
<div class="a" style="left:50px;top:700px;width:1px;height:7px;background:#3050a0"></div>
<div class="a" style="left:56px;top:703px;width:9px;height:1px;background:repeating-linear-gradient(90deg,#808080 0 1px,transparent 1px 2px)"></div>
<svg class="a" style="left:65px;top:692px" width="24" height="22" viewBox="0 0 24 22"><rect x="2" y="1" width="15" height="4" rx="2" fill="#f0d060" stroke="#b09030"/><rect x="4" y="4" width="11" height="12" fill="#f3dc78" stroke="#b09030"/><rect x="2" y="14" width="15" height="4" rx="2" fill="#f0d060" stroke="#b09030"/><path d="M17 12 l4 4 -4 4 -4 -4 Z" fill="#e8c850" stroke="#a88a20"/></svg>
<div class="t" style="left:93px;top:696px;font-size:16px;color:#000;">Examples</div>
<div class="a" style="left:51px;top:725px;width:14px;height:1px;background:repeating-linear-gradient(90deg,#808080 0 1px,transparent 1px 2px)"></div>
<svg class="a" style="left:65px;top:714px" width="24" height="22" viewBox="0 0 24 22"><rect x="2" y="1" width="15" height="4" rx="2" fill="#f0d060" stroke="#b09030"/><rect x="4" y="4" width="11" height="12" fill="#f3dc78" stroke="#b09030"/><rect x="2" y="14" width="15" height="4" rx="2" fill="#f0d060" stroke="#b09030"/><path d="M17 12 l4 4 -4 4 -4 -4 Z" fill="#e8c850" stroke="#a88a20"/></svg>
<div class="t" style="left:93px;top:718px;font-size:16px;color:#000;">PeriodConverter</div>
<div class="a" style="left:232px;top:119px;width:21px;height:638px;background:#f0f0f0"></div>
<div class="a" style="left:240px;top:522px;width:3px;height:214px;background:#858585;border-radius:1px"></div>
<div class="a" style="left:8px;top:757px;width:246px;height:1px;background:#000"></div>
<div class="a" style="left:11px;top:757px;width:55px;height:25px;background:#fff;border:1px solid #000;border-top:none"></div>
<div class="a" style="left:11px;top:757px;width:54px;height:1px;background:#fff"></div>
<div class="t" style="left:24px;top:762px;font-size:15px;color:#000;">常用</div>
<div class="t" style="left:80px;top:762px;font-size:15px;color:#888;">收藏夹</div>
<div class="a" style="left:136px;top:762px;width:1px;height:19px;background:#555"></div>
<div class="a" style="left:258px;top:97px;width:2px;height:693px;background:#a0a0a0"></div>
<svg class="a" style="left:0;top:0" width="1913" height="871" viewBox="0 0 1913 871" shape-rendering="auto">
<rect x="260" y="98" width="1653" height="692" fill="#000"/>
<defs><clipPath id="cm"><rect x="263" y="102" width="1594" height="474"/></clipPath><clipPath id="co"><rect x="263" y="580" width="1594" height="109"/></clipPath><clipPath id="cr"><rect x="263" y="692" width="1594" height="73"/></clipPath></defs>
<g clip-path="url(#cm)">
<path d="M263 135.5H1857" stroke="#a8b4c4" shape-rendering="crispEdges"/>
<path d="M311.5 103V576 M359.5 103V576 M407.5 103V576 M455.5 103V576 M503.5 103V576 M551.5 103V576 M599.5 103V576 M647.5 103V576 M695.5 103V576 M743.5 103V576 M791.5 103V576 M839.5 103V576 M887.5 103V576 M935.5 103V576 M983.5 103V576 M1031.5 103V576 M1079.5 103V576 M1127.5 103V576 M1175.5 103V576 M1223.5 103V576 M1271.5 103V576 M1319.5 103V576 M1367.5 103V576 M1415.5 103V576 M1463.5 103V576 M1511.5 103V576 M1559.5 103V576 M1607.5 103V576 M1655.5 103V576 M1703.5 103V576 M1751.5 103V576 M1799.5 103V576 M1847.5 103V576" stroke="#98aac0" stroke-width="1" stroke-dasharray="3 3" fill="none" shape-rendering="crispEdges"/>
<rect x="263" y="531" width="150" height="45" fill="#6f7d8c"/>
<path d="M295 533 a18 18 0 1 0 0.1 0 Z M295 541 a10 10 0 1 1 -0.1 0 Z" fill="#ff0000" fill-rule="evenodd"/>
<rect x="266" y="537" width="26" height="6" fill="#ff0000"/>
<path d="M322 536 h12 l-6 25 h-10 Z M344 536 h12 l-8 26 h-10 Z M372 537 h9 l-6 22 h-9 Z M386 537 h14 l-10 23 h-12 Z" fill="#ffffff"/>
<path d="M392 537 l8 0 -4 5 Z" fill="#ff2020"/>
<text x="301" y="573.5" font-family="Liberation Sans" font-size="15" fill="#dfe6ec">www.xwdlk.com</text>
<path d="M279 515.5V570.8 M295 513.8V567.9 M311 511.5V565.0 M327 509.8V562.2 M343 506.9V558.2 M359 504.0V554.7 M375 500.6V551.3 M391 497.7V547.8 M407 493.7V544.3 M423 489.1V539.5 M439 484.5V535.1 M455 479.0V530.5 M471 472.7V525.8 M487 466.9V519.3 M503 460.5V513.8 M519 453.8V507.4 M535 445.5V500.9 M551 437.5V494.5 M567 429.5V489.0 M583 420.7V482.6 M599 411.9V475.2 M615 403.0V469.7 M631 392.3V462.0 M647 383.0V452.9 M663 372.9V444.8 M679 362.5V440.0 M695 351.3V435.2 M711 341.5V428.7 M727 330.7V419.1 M743 319.4V411.9 M759 308.2V403.8 M775 297.3V397.0 M791 286.5V389.5 M807 277.2V382.5 M823 269.2V374.5 M839 259.1V367.5 M855 251.3V362.5 M871 243.5V356.5 M887 235.5V349.8 M903 227.9V344.3 M919 221.0V338.8 M935 214.1V333.3 M951 208.6V327.7 M967 204.4V324.2 M983 198.9V319.5 M999 196.2V315.3 M1015 190.7V311.2 M1031 188.4V307.1 M1047 185.7V302.9 M1063 183.8V298.8 M1079 181.0V294.7 M1095 178.8V290.5 M1111 176.9V286.4 M1127 174.7V282.3 M1143 172.7V278.1 M1159 170.8V274.0 M1175 169.2V271.2 M1191 167.5V267.5 M1207 165.3V265.4 M1223 164.2V260.8 M1239 163.1V257.4 M1255 161.4V253.9 M1271 159.6V250.5 M1287 158.5V247.0 M1303 156.9V243.6 M1319 155.5V240.2 M1335 155.0V237.9 M1351 154.6V235.6 M1367 153.4V233.3 M1383 152.7V231.0 M1399 151.6V229.4 M1415 150.4V227.5 M1431 149.3V225.2 M1447 148.1V222.9 M1463 146.5V220.6 M1479 152.5V219.5 M1495 152.5V218.3 M1511 144.5V216.1" stroke="#800000" stroke-width="9" stroke-linecap="round" fill="none"/>
<path d="M695 579.0V579.1 M711 577.3V577.4 M727 574.3V574.4 M743 572.2V572.3 M759 569.2V570.8 M775 566.8V569.3 M791 562.4V569.3 M807 558.5V567.2 M823 554.9V567.2 M839 550.4V566.3 M855 545.9V566.5 M871 540.9V561.8 M887 535.5V558.2 M903 530.4V552.9 M919 525.0V548.4 M935 519.7V543.3 M951 513.1V537.3 M967 506.5V530.5 M983 499.7V524.5 M999 493.7V518.5 M1015 487.7V514.0 M1031 481.8V508.1 M1047 476.7V503.6 M1063 470.7V499.1 M1079 464.0V494.7 M1095 459.4V488.7 M1111 454.3V484.2 M1127 448.9V478.2 M1143 445.6V474.2 M1159 441.8V469.2 M1175 436.8V464.9 M1191 431.7V461.6 M1207 427.9V455.8 M1223 423.6V452.0 M1239 419.1V448.2 M1255 414.8V443.2 M1271 409.8V439.6 M1287 405.7V434.6 M1303 401.4V430.5 M1319 396.4V425.7 M1335 392.1V422.0 M1351 387.5V417.4 M1367 383.0V413.1 M1383 379.5V408.6 M1399 374.9V403.5 M1415 370.4V399.2 M1431 366.1V396.0 M1447 362.3V390.9 M1463 358.5V386.6 M1479 353.4V382.8 M1495 349.2V378.3 M1511 345.1V374.0" stroke="#606060" stroke-width="8" stroke-linecap="round" fill="none"/>
<polyline points="695.0,577.0 711.0,575.3 727.0,572.3 743.0,570.2 759.0,567.2 775.0,564.8 791.0,560.4 807.0,556.5 823.0,552.9 839.0,548.4 855.0,543.9 871.0,538.9 887.0,533.5 903.0,528.4 919.0,523.0 935.0,517.7 951.0,511.1 967.0,504.5 983.0,497.7 999.0,491.7 1015.0,485.7 1031.0,479.8 1047.0,474.7 1063.0,468.7 1079.0,462.0 1095.0,457.4 1111.0,452.3 1127.0,446.9 1143.0,443.6 1159.0,439.8 1175.0,434.8 1191.0,429.7 1207.0,425.9 1223.0,421.6 1239.0,417.1 1255.0,412.8 1271.0,407.8 1287.0,403.7 1303.0,399.4 1319.0,394.4 1335.0,390.1 1351.0,385.5 1367.0,381.0 1383.0,377.5 1399.0,372.9 1415.0,368.4 1431.0,364.1 1447.0,360.3 1463.0,356.5 1479.0,351.4 1495.0,347.2 1511.0,343.1" fill="none" stroke="#a0a0a0" stroke-width="1" stroke-linejoin="round" />
</g>
<path d="M311.5 580V689 M311.5 692V765 M359.5 580V689 M359.5 692V765 M407.5 580V689 M407.5 692V765 M455.5 580V689 M455.5 692V765 M503.5 580V689 M503.5 692V765 M551.5 580V689 M551.5 692V765 M599.5 580V689 M599.5 692V765 M647.5 580V689 M647.5 692V765 M695.5 580V689 M695.5 692V765 M743.5 580V689 M743.5 692V765 M791.5 580V689 M791.5 692V765 M839.5 580V689 M839.5 692V765 M887.5 580V689 M887.5 692V765 M935.5 580V689 M935.5 692V765 M983.5 580V689 M983.5 692V765 M1031.5 580V689 M1031.5 692V765 M1079.5 580V689 M1079.5 692V765 M1127.5 580V689 M1127.5 692V765 M1175.5 580V689 M1175.5 692V765 M1223.5 580V689 M1223.5 692V765 M1271.5 580V689 M1271.5 692V765 M1319.5 580V689 M1319.5 692V765 M1367.5 580V689 M1367.5 692V765 M1415.5 580V689 M1415.5 692V765 M1463.5 580V689 M1463.5 692V765 M1511.5 580V689 M1511.5 692V765 M1559.5 580V689 M1559.5 692V765 M1607.5 580V689 M1607.5 692V765 M1655.5 580V689 M1655.5 692V765 M1703.5 580V689 M1703.5 692V765 M1751.5 580V689 M1751.5 692V765 M1799.5 580V689 M1799.5 692V765 M1847.5 580V689 M1847.5 692V765 M264 116.5H1857 M264 165.5H1857 M264 214.5H1857 M264 263.5H1857 M264 312.5H1857 M264 361.5H1857 M264 410.5H1857 M264 459.5H1857 M264 508.5H1857 M264 557.5H1857" stroke="#98aac0" stroke-width="1" stroke-dasharray="3 3" fill="none" shape-rendering="crispEdges"/>
<path d="M264 645.5H1857" stroke="#406a6a" stroke-dasharray="3 3" shape-rendering="crispEdges"/>
<g clip-path="url(#cm)">
<rect x="1480" y="127" width="31" height="21" fill="#ff6a50"/>
<rect x="1507" y="141" width="4" height="7" fill="#806040"/>
<path d="M263 369.5H1857 M263 530.5H1857" stroke="#ff0000" shape-rendering="crispEdges"/>
<rect x="263" y="380" width="785" height="3" fill="#ff00ff"/>
<rect x="263" y="469" width="642" height="3" fill="#ffff00"/>
<path d="M262.0 515.8 C270.2 514.6 292.3 511.7 311.4 508.7 C330.5 505.7 354.4 502.6 376.8 497.8 C399.2 493.0 423.0 487.2 446.0 480.0 C469.0 472.8 493.4 463.8 515.0 454.7 C536.6 445.6 559.1 434.6 575.6 425.5 C592.1 416.4 599.3 409.4 613.7 400.1 C628.1 390.9 646.5 380.4 662.0 370.0 C677.5 359.6 686.1 351.5 706.8 337.8 C727.5 324.1 763.0 302.2 786.0 287.8 C809.0 273.4 828.9 260.7 844.6 251.6 C860.3 242.5 862.4 240.2 880.0 233.0 C897.6 225.8 922.4 216.7 950.0 208.5 C977.6 200.3 1015.7 190.0 1045.4 184.0 C1075.1 178.0 1102.2 175.7 1128.0 172.4 C1153.8 169.1 1170.5 166.8 1200.0 164.1 C1229.5 161.4 1268.2 158.6 1304.8 156.0 C1341.4 153.4 1385.1 151.2 1419.6 148.5 C1454.1 145.8 1496.4 141.4 1511.8 140.0" fill="none" stroke="#ffffff" stroke-width="1.2" stroke-linejoin="round" />
<path d="M262.0 576.0 C273.5 574.1 305.6 569.5 330.9 564.4 C356.1 559.3 391.6 551.0 413.5 545.4 C435.4 539.8 431.5 541.4 462.0 530.5 C492.5 519.6 570.3 490.3 596.6 480.0 C622.9 469.7 602.8 476.3 620.0 468.6 C637.2 460.9 673.3 445.6 700.0 434.0 C726.7 422.4 750.0 412.0 780.0 398.7 C810.0 385.4 851.7 365.0 880.0 354.3 C908.3 343.6 927.0 340.3 950.0 334.3 C973.0 328.3 992.8 325.6 1017.8 318.5 C1042.8 311.4 1069.6 300.3 1100.0 292.0 C1130.4 283.7 1158.2 277.8 1200.0 268.8 C1241.8 259.8 1298.9 246.0 1350.7 237.8 C1402.5 229.7 1484.3 222.9 1511.0 219.9" fill="none" stroke="#ffffff" stroke-width="1.2" stroke-linejoin="round" />
<polyline points="262.0,525.0 936.0,145.0 1015.0,317.0 1479.0,125.3" fill="none" stroke="#ff0000" stroke-width="1" stroke-linejoin="round" />
<path d="M262.0 456.5 C269.0 456.0 284.8 455.7 304.0 453.7 C323.2 451.7 357.2 448.0 377.0 444.3 C396.8 440.6 407.3 436.6 423.0 431.7 C438.7 426.8 454.3 422.1 471.0 415.0 C487.7 407.9 505.5 398.4 523.0 389.0 C540.5 379.6 563.2 366.9 576.0 358.5 C588.8 350.1 588.8 346.0 600.0 338.3 C611.2 330.6 627.2 324.7 643.0 312.5 C658.8 300.3 677.9 280.3 694.7 265.0 C711.5 249.7 727.3 234.7 743.6 220.6 C759.9 206.5 776.6 192.6 792.4 180.4 C808.2 168.2 822.5 157.9 838.3 147.4 C854.1 136.9 874.2 125.1 887.1 117.2 C900.0 109.3 910.3 103.4 915.8 100.0 C921.3 96.6 919.3 97.5 920.0 97.0" fill="none" stroke="#ff0000" stroke-width="1" stroke-linejoin="round" stroke-dasharray="16 6"/>
<path d="M262.0 565.5 C266.7 565.5 290.5 566.0 302.0 565.5 C313.5 565.0 347.7 562.9 360.7 561.5 C373.7 560.1 401.7 555.3 413.5 553.5 C425.3 551.7 446.9 548.8 462.0 546.0 C477.1 543.2 527.4 532.6 543.3 529.3 C559.2 526.0 586.6 520.9 598.5 517.4 C610.4 513.9 632.0 502.8 645.0 499.0 C658.0 495.2 692.7 489.8 709.7 485.2 C726.7 480.6 775.7 467.2 790.3 459.9 C804.9 452.6 823.5 432.4 835.0 422.5 C846.5 412.6 876.6 385.6 888.8 374.8 C901.0 364.0 931.0 337.9 939.6 330.0 C948.2 322.1 956.8 313.9 962.7 307.4 C968.6 300.9 981.9 281.8 990.3 274.4 C998.7 267.0 1022.2 248.8 1034.4 244.0 C1046.6 239.2 1084.1 234.1 1095.0 233.0 C1105.9 231.9 1120.9 233.4 1128.0 234.4 C1135.1 235.4 1148.4 240.0 1155.6 241.3 C1162.8 242.6 1182.0 244.5 1190.0 245.8 C1198.0 247.1 1216.6 252.2 1224.4 252.7 C1232.2 253.2 1249.1 252.1 1256.6 250.4 C1264.1 248.7 1279.6 240.6 1288.7 237.8 C1297.8 235.0 1325.3 228.7 1334.7 226.3 C1344.1 223.9 1360.4 219.8 1369.0 217.1 C1377.6 214.4 1399.5 205.6 1408.1 203.3 C1416.7 201.0 1433.2 199.6 1442.6 197.6 C1452.0 195.6 1475.1 188.9 1488.5 186.1 C1501.9 183.3 1549.4 175.0 1557.4 173.5" fill="none" stroke="#0000ff" stroke-width="1" stroke-linejoin="round" />
<path d="M262.0 558.0 C265.4 557.7 288.0 554.8 296.0 554.6 C304.0 554.4 333.9 555.7 342.0 555.8 C350.1 555.9 370.5 556.1 377.0 555.8 C383.5 555.4 398.5 554.6 407.0 552.3 C415.5 550.0 455.4 535.0 462.0 532.8 C468.6 530.6 463.9 533.2 473.5 530.3 C483.1 527.4 545.5 506.6 558.0 503.6 C570.5 500.6 589.7 502.4 598.5 500.0 C607.3 497.6 638.2 483.1 645.7 480.0 C653.2 476.9 665.6 470.6 673.0 468.6 C680.4 466.6 710.9 461.7 719.7 459.8 C728.6 457.9 755.5 451.2 761.5 449.3 C767.5 447.4 777.1 442.6 780.0 441.3 C782.9 440.0 786.6 438.8 790.3 436.0 C794.0 433.2 810.3 424.2 817.2 413.6 C824.1 403.0 852.7 342.3 859.0 330.0 C865.3 317.7 875.4 297.9 880.0 291.0 C884.6 284.1 897.9 266.1 904.8 260.6 C911.7 255.1 941.0 241.3 949.0 235.8 C957.0 230.3 978.1 208.7 984.7 205.4 C991.3 202.1 1010.0 201.0 1015.0 202.7 C1020.0 204.4 1030.8 218.4 1034.4 222.0 C1038.0 225.6 1045.5 235.2 1051.0 238.5 C1056.5 241.8 1083.2 252.9 1089.5 255.0 C1095.8 257.1 1107.7 258.9 1114.3 259.2 C1120.9 259.5 1148.2 257.7 1155.6 257.8 C1163.0 257.9 1182.3 261.3 1188.7 260.6 C1195.1 259.9 1213.3 252.9 1219.9 250.4 C1226.5 247.9 1246.0 239.3 1254.3 235.5 C1262.6 231.7 1293.6 216.9 1302.5 212.5 C1311.4 208.1 1333.5 194.3 1343.0 191.3 C1352.5 188.3 1389.7 182.9 1398.0 182.7 C1406.3 182.5 1416.0 188.9 1425.7 188.9 C1435.4 188.9 1485.6 184.2 1494.6 182.7 C1503.6 181.2 1509.7 176.8 1516.0 173.5 C1522.3 170.2 1553.3 151.8 1557.4 149.4" fill="none" stroke="#32cd32" stroke-width="1" stroke-linejoin="round" />
<path d="M463.0 581.0 C467.3 580.1 473.9 579.2 488.9 575.4 C503.9 571.6 534.4 563.4 552.9 558.4 C571.4 553.4 584.3 549.5 600.0 545.3 C615.7 541.1 631.3 537.1 647.0 533.0 C662.7 528.9 678.3 524.5 694.0 520.8 C709.7 517.0 723.8 515.2 741.0 510.5 C758.2 505.8 772.9 500.3 797.5 492.6 C822.1 484.9 857.7 472.5 888.8 464.3 C919.9 456.1 954.4 451.3 984.3 443.4 C1014.2 435.4 1041.6 425.6 1068.0 416.6 C1094.4 407.7 1116.6 399.0 1142.5 389.7 C1168.4 380.4 1193.9 370.9 1223.4 360.8 C1252.9 350.7 1287.4 338.0 1319.4 329.2 C1351.4 320.4 1384.7 313.1 1415.4 307.8 C1446.1 302.5 1489.0 299.0 1503.7 297.2" fill="none" stroke="#00e000" stroke-width="1.1" stroke-linejoin="round" stroke-dasharray="12 8"/>
<path d="M440.0 577.0 C443.8 576.1 468.2 569.1 477.6 567.9 C487.0 566.7 521.8 565.6 534.0 565.0 C546.2 564.4 588.7 563.3 600.0 562.2 C611.3 561.1 639.1 556.2 647.0 553.7 C654.9 551.2 671.5 540.1 679.0 537.7 C686.5 535.4 714.2 532.9 722.3 530.2 C730.4 527.5 752.2 512.7 760.0 510.5 C767.8 508.3 792.2 508.9 800.0 508.6 C807.8 508.3 832.4 508.5 838.0 507.6 C843.6 506.8 852.4 502.8 856.0 500.1 C859.6 497.4 870.6 483.4 873.9 480.7 C877.2 478.0 881.3 474.6 888.8 473.3 C896.3 472.0 939.0 469.7 948.5 467.3 C958.0 464.9 978.6 451.2 984.3 449.4 C990.0 447.6 998.9 451.3 1005.2 449.4 C1011.5 447.5 1041.3 435.1 1047.0 430.0 C1052.7 424.9 1059.3 405.7 1062.0 398.7 C1064.7 391.7 1072.5 365.7 1074.3 360.0 C1076.1 354.3 1078.6 344.9 1079.9 341.9 C1081.2 338.9 1085.8 332.9 1087.3 330.0 C1088.8 327.1 1092.6 315.2 1095.0 313.0 C1097.4 310.8 1090.7 308.8 1111.5 308.3 C1132.3 307.8 1282.2 308.7 1303.0 308.3 C1323.8 307.9 1316.2 305.7 1319.4 304.0 C1322.6 302.3 1329.7 293.6 1334.5 291.4 C1339.3 289.2 1360.5 282.9 1367.4 282.0 C1374.3 281.1 1398.7 282.7 1403.5 282.5 C1408.3 282.3 1411.1 282.2 1415.0 280.3 C1418.9 278.4 1437.8 266.0 1442.6 263.0 C1447.4 260.0 1459.5 251.9 1463.2 250.4 C1466.9 248.9 1474.5 251.0 1479.3 248.1 C1484.1 245.2 1508.3 224.3 1511.5 221.7" fill="none" stroke="#0000ff" stroke-width="3.6" stroke-linejoin="round" />
<path d="M263 544V546 M263 550V552" stroke="#00ff00" stroke-width="1.5"/><rect x="258" y="546" width="10" height="4.0" fill="#fff" stroke="#00ff00" stroke-width="1.5"/><path d="M279 548V550 M279 560.4V564" stroke="#00ff00" stroke-width="1.5"/><rect x="274" y="550" width="10" height="10.4" fill="#fff" stroke="#00ff00" stroke-width="1.5"/><path d="M295 551V556 M295 564.5V566" stroke="#00ff00" stroke-width="1.5"/><rect x="290" y="556" width="10" height="8.5" fill="#000" stroke="#00ff00" stroke-width="1.5"/><path d="M311 550V553 M311 557V560" stroke="#00ff00" stroke-width="1.5"/><rect x="306" y="553" width="10" height="4.0" fill="#000" stroke="#00ff00" stroke-width="1.5"/><path d="M327 546V547 M327 552V556" stroke="#00ff00" stroke-width="1.5"/><rect x="322" y="547" width="10" height="5.0" fill="#000" stroke="#00ff00" stroke-width="1.5"/><path d="M343 541V548 M343 552V556" stroke="#00ff00" stroke-width="1.5"/><rect x="338" y="548" width="10" height="4.0" fill="#fff" stroke="#00ff00" stroke-width="1.5"/><path d="M359 535V537 M359 552V553" stroke="#00ff00" stroke-width="1.5"/><rect x="354" y="537" width="10" height="15.0" fill="#000" stroke="#00ff00" stroke-width="1.5"/><path d="M375 522V523 M375 538V540" stroke="#00ff00" stroke-width="1.5"/><rect x="370" y="523" width="10" height="15.0" fill="#000" stroke="#00ff00" stroke-width="1.5"/><path d="M391 522V524 M391 529V534" stroke="#00ff00" stroke-width="1.5"/><rect x="386" y="524" width="10" height="5.0" fill="#fff" stroke="#00ff00" stroke-width="1.5"/><path d="M407 516V522 M407 530V534" stroke="#00ff00" stroke-width="1.5"/><rect x="402" y="522" width="10" height="8.0" fill="#000" stroke="#00ff00" stroke-width="1.5"/><path d="M423 516V520 M423 524V533" stroke="#00ff00" stroke-width="1.5"/><rect x="418" y="520" width="10" height="4.0" fill="#fff" stroke="#00ff00" stroke-width="1.5"/><path d="M439 503V510 M439 524V528" stroke="#00ff00" stroke-width="1.5"/><rect x="434" y="510" width="10" height="14.0" fill="#000" stroke="#00ff00" stroke-width="1.5"/><path d="M455 495V496 M455 511V512" stroke="#00ff00" stroke-width="1.5"/><rect x="450" y="496" width="10" height="15.0" fill="#000" stroke="#00ff00" stroke-width="1.5"/><path d="M471 494V498 M471 501.5V506" stroke="#00ff00" stroke-width="1.5"/><rect x="466" y="498" width="10" height="3.5" fill="#fff" stroke="#00ff00" stroke-width="1.5"/><path d="M487 491V511 M482 503H492" stroke="#00ff00" stroke-width="1.5"/><path d="M503 495V497 M503 505V508" stroke="#00ff00" stroke-width="1.5"/><rect x="498" y="497" width="10" height="8.0" fill="#000" stroke="#00ff00" stroke-width="1.5"/><path d="M519 492V495 M519 503V510" stroke="#00ff00" stroke-width="1.5"/><rect x="514" y="495" width="10" height="8.0" fill="#fff" stroke="#00ff00" stroke-width="1.5"/><path d="M535 494V502.7 M535 505V508" stroke="#00ff00" stroke-width="1.5"/><rect x="530" y="502.7" width="10" height="2.3" fill="#fff" stroke="#00ff00" stroke-width="1.5"/><path d="M551 487.6V490.7 M551 504.5V507.3" stroke="#00ff00" stroke-width="1.5"/><rect x="546" y="490.7" width="10" height="13.8" fill="#000" stroke="#00ff00" stroke-width="1.5"/><path d="M567 447.6V451 M567 490V490.7" stroke="#00ff00" stroke-width="1.5"/><rect x="562" y="451" width="10" height="39.0" fill="#000" stroke="#00ff00" stroke-width="1.5"/><path d="M583 444V451.6 M583 459.5V468.7" stroke="#00ff00" stroke-width="1.5"/><rect x="578" y="451.6" width="10" height="7.9" fill="#fff" stroke="#00ff00" stroke-width="1.5"/><path d="M599 455.8V459.5 M599 467V473.3" stroke="#00ff00" stroke-width="1.5"/><rect x="594" y="459.5" width="10" height="7.5" fill="#fff" stroke="#00ff00" stroke-width="1.5"/><path d="M615 457.7V475 M610 467H620" stroke="#00ff00" stroke-width="1.5"/><path d="M631 459.8V465.4 M631 467.8V473.4" stroke="#00ff00" stroke-width="1.5"/><rect x="626" y="465.4" width="10" height="2.4" fill="#000" stroke="#00ff00" stroke-width="1.5"/><path d="M647 458V461.4 M647 465.4V469" stroke="#00ff00" stroke-width="1.5"/><rect x="642" y="461.4" width="10" height="4.0" fill="#000" stroke="#00ff00" stroke-width="1.5"/><path d="M663 445.3V448.5 M663 461.4V465.4" stroke="#00ff00" stroke-width="1.5"/><rect x="658" y="448.5" width="10" height="12.9" fill="#000" stroke="#00ff00" stroke-width="1.5"/><path d="M679 439.7V449.3 M674 447H684" stroke="#00ff00" stroke-width="1.5"/><path d="M695 438V440.5 M695 447V452" stroke="#00ff00" stroke-width="1.5"/><rect x="690" y="440.5" width="10" height="6.5" fill="#000" stroke="#00ff00" stroke-width="1.5"/><path d="M711 439V449 M706 441H716" stroke="#00ff00" stroke-width="1.5"/><path d="M727 420.4V423.3 M727 441.3V445.3" stroke="#00ff00" stroke-width="1.5"/><rect x="722" y="423.3" width="10" height="18.0" fill="#000" stroke="#00ff00" stroke-width="1.5"/><path d="M743 410.7V431.6 M738 423.3H748" stroke="#00ff00" stroke-width="1.5"/><path d="M759 353.7V367.7 M759 395.5V428.4" stroke="#00ff00" stroke-width="1.5"/><rect x="754" y="367.7" width="10" height="27.8" fill="#000" stroke="#00ff00" stroke-width="1.5"/><path d="M775 283V296 M775 367.5V367.5" stroke="#00ff00" stroke-width="1.5"/><rect x="770" y="296" width="10" height="71.5" fill="#000" stroke="#00ff00" stroke-width="1.5"/><path d="M791 236V248.5 M791 295.5V296.5" stroke="#00ff00" stroke-width="1.5"/><rect x="786" y="248.5" width="10" height="47.0" fill="#000" stroke="#00ff00" stroke-width="1.5"/><path d="M807 236V248.2 M807 267.5V269" stroke="#00ff00" stroke-width="1.5"/><rect x="802" y="248.2" width="10" height="19.3" fill="#fff" stroke="#00ff00" stroke-width="1.5"/><path d="M823 245V249 M823 266.5V272.5" stroke="#00ff00" stroke-width="1.5"/><rect x="818" y="249" width="10" height="17.5" fill="#000" stroke="#00ff00" stroke-width="1.5"/><path d="M839 236V257 M834 249.9H844" stroke="#00ff00" stroke-width="1.5"/><path d="M855 233V258 M850 247.8H860" stroke="#00ff00" stroke-width="1.5"/><path d="M871 228V245.4 M871 248.8V252" stroke="#00ff00" stroke-width="1.5"/><rect x="866" y="245.4" width="10" height="3.4" fill="#fff" stroke="#00ff00" stroke-width="1.5"/><path d="M887 198V198.4 M887 245.4V246" stroke="#00ff00" stroke-width="1.5"/><rect x="882" y="198.4" width="10" height="47.0" fill="#000" stroke="#00ff00" stroke-width="1.5"/><path d="M903 190.5V219 M898 197.5H908" stroke="#00ff00" stroke-width="1.5"/><path d="M919 162V171 M919 198.6V205" stroke="#00ff00" stroke-width="1.5"/><rect x="914" y="171" width="10" height="27.6" fill="#000" stroke="#00ff00" stroke-width="1.5"/><path d="M935 144.8V181 M930 170.6H940" stroke="#00ff00" stroke-width="1.5"/><path d="M951 165.5V173.5 M951 240V277.3" stroke="#00ff00" stroke-width="1.5"/><rect x="946" y="173.5" width="10" height="66.5" fill="#fff" stroke="#00ff00" stroke-width="1.5"/><path d="M967 228V235.3 M967 240.2V281.1" stroke="#00ff00" stroke-width="1.5"/><rect x="962" y="235.3" width="10" height="4.9" fill="#fff" stroke="#00ff00" stroke-width="1.5"/><path d="M983 231V235.6 M983 281.1V304.8" stroke="#00ff00" stroke-width="1.5"/><rect x="978" y="235.6" width="10" height="45.5" fill="#fff" stroke="#00ff00" stroke-width="1.5"/><path d="M999 272.3V281.1 M999 310.2V312" stroke="#00ff00" stroke-width="1.5"/><rect x="994" y="281.1" width="10" height="29.1" fill="#fff" stroke="#00ff00" stroke-width="1.5"/><path d="M1015 251V252 M1015 310.2V312" stroke="#00ff00" stroke-width="1.5"/><rect x="1010" y="252" width="10" height="58.2" fill="#000" stroke="#00ff00" stroke-width="1.5"/><path d="M1031 219V220.6 M1031 252V286.5" stroke="#00ff00" stroke-width="1.5"/><rect x="1026" y="220.6" width="10" height="31.4" fill="#000" stroke="#00ff00" stroke-width="1.5"/><path d="M1047 189V219.5 M1047 235.5V238" stroke="#00ff00" stroke-width="1.5"/><rect x="1042" y="219.5" width="10" height="16.0" fill="#fff" stroke="#00ff00" stroke-width="1.5"/><path d="M1063 224.5V236 M1063 256V268.8" stroke="#00ff00" stroke-width="1.5"/><rect x="1058" y="236" width="10" height="20.0" fill="#fff" stroke="#00ff00" stroke-width="1.5"/><path d="M1079 241V256.6 M1079 270.8V278.5" stroke="#00ff00" stroke-width="1.5"/><rect x="1074" y="256.6" width="10" height="14.2" fill="#fff" stroke="#00ff00" stroke-width="1.5"/><path d="M1095 271.8V274.2 M1095 284.2V293" stroke="#00ff00" stroke-width="1.5"/><rect x="1090" y="274.2" width="10" height="10.0" fill="#fff" stroke="#00ff00" stroke-width="1.5"/><path d="M1111 257V260.4 M1111 285.4V288" stroke="#00ff00" stroke-width="1.5"/><rect x="1106" y="260.4" width="10" height="25.0" fill="#000" stroke="#00ff00" stroke-width="1.5"/><path d="M1127 249.8V256.5 M1127 260.1V266" stroke="#00ff00" stroke-width="1.5"/><rect x="1122" y="256.5" width="10" height="3.6" fill="#000" stroke="#00ff00" stroke-width="1.5"/><path d="M1143 237V239.8 M1143 254V274.4" stroke="#00ff00" stroke-width="1.5"/><rect x="1138" y="239.8" width="10" height="14.2" fill="#000" stroke="#00ff00" stroke-width="1.5"/><path d="M1159 201.3V215 M1159 238.5V249.5" stroke="#00ff00" stroke-width="1.5"/><rect x="1154" y="215" width="10" height="23.5" fill="#000" stroke="#00ff00" stroke-width="1.5"/><path d="M1175 213V213.7 M1175 244V249" stroke="#00ff00" stroke-width="1.5"/><rect x="1170" y="213.7" width="10" height="30.3" fill="#fff" stroke="#00ff00" stroke-width="1.5"/><path d="M1191 220V222 M1191 243V250" stroke="#00ff00" stroke-width="1.5"/><rect x="1186" y="222" width="10" height="21.0" fill="#000" stroke="#00ff00" stroke-width="1.5"/><path d="M1207 196.4V208.4 M1207 221.5V222.8" stroke="#00ff00" stroke-width="1.5"/><rect x="1202" y="208.4" width="10" height="13.1" fill="#000" stroke="#00ff00" stroke-width="1.5"/><path d="M1223 188.4V197.6 M1223 208V221.7" stroke="#00ff00" stroke-width="1.5"/><rect x="1218" y="197.6" width="10" height="10.4" fill="#000" stroke="#00ff00" stroke-width="1.5"/><path d="M1239 188.4V196.4 M1239 205.2V212.5" stroke="#00ff00" stroke-width="1.5"/><rect x="1234" y="196.4" width="10" height="8.8" fill="#fff" stroke="#00ff00" stroke-width="1.5"/><path d="M1255 190V200.3 M1255 205.6V207" stroke="#00ff00" stroke-width="1.5"/><rect x="1250" y="200.3" width="10" height="5.3" fill="#000" stroke="#00ff00" stroke-width="1.5"/><path d="M1271 162V168.4 M1271 200.3V210.2" stroke="#00ff00" stroke-width="1.5"/><rect x="1266" y="168.4" width="10" height="31.9" fill="#000" stroke="#00ff00" stroke-width="1.5"/><path d="M1287 164.3V168.4 M1287 176.2V194.1" stroke="#00ff00" stroke-width="1.5"/><rect x="1282" y="168.4" width="10" height="7.8" fill="#fff" stroke="#00ff00" stroke-width="1.5"/><path d="M1303 162V176.5 M1303 205.2V206.8" stroke="#00ff00" stroke-width="1.5"/><rect x="1298" y="176.5" width="10" height="28.7" fill="#fff" stroke="#00ff00" stroke-width="1.5"/><path d="M1319 194.1V203.3 M1319 205.5V208" stroke="#00ff00" stroke-width="1.5"/><rect x="1314" y="203.3" width="10" height="2.2" fill="#000" stroke="#00ff00" stroke-width="1.5"/><path d="M1335 172V178.5 M1335 203.3V207" stroke="#00ff00" stroke-width="1.5"/><rect x="1330" y="178.5" width="10" height="24.8" fill="#000" stroke="#00ff00" stroke-width="1.5"/><path d="M1351 164V170.7 M1351 184.5V187" stroke="#00ff00" stroke-width="1.5"/><rect x="1346" y="170.7" width="10" height="13.8" fill="#000" stroke="#00ff00" stroke-width="1.5"/><path d="M1367 167.7V170.7 M1367 190V196.4" stroke="#00ff00" stroke-width="1.5"/><rect x="1362" y="170.7" width="10" height="19.3" fill="#fff" stroke="#00ff00" stroke-width="1.5"/><path d="M1383 165.4V190.7 M1383 195.3V198.7" stroke="#00ff00" stroke-width="1.5"/><rect x="1378" y="190.7" width="10" height="4.6" fill="#fff" stroke="#00ff00" stroke-width="1.5"/><path d="M1399 186.1V202.2 M1394 194.6H1404" stroke="#00ff00" stroke-width="1.5"/><path d="M1415 180V188.4 M1415 194.1V196" stroke="#00ff00" stroke-width="1.5"/><rect x="1410" y="188.4" width="10" height="5.7" fill="#000" stroke="#00ff00" stroke-width="1.5"/><path d="M1431 170V176.5 M1431 188.4V190.7" stroke="#00ff00" stroke-width="1.5"/><rect x="1426" y="176.5" width="10" height="11.9" fill="#000" stroke="#00ff00" stroke-width="1.5"/><path d="M1447 154V156.3 M1447 174.6V178" stroke="#00ff00" stroke-width="1.5"/><rect x="1442" y="156.3" width="10" height="18.3" fill="#000" stroke="#00ff00" stroke-width="1.5"/><path d="M1463 125.3V134.4 M1463 156.3V160.8" stroke="#00ff00" stroke-width="1.5"/><rect x="1458" y="134.4" width="10" height="21.9" fill="#000" stroke="#00ff00" stroke-width="1.5"/><path d="M1479 126V134.4 M1479 148.2V149.4" stroke="#00ff00" stroke-width="1.5"/><rect x="1474" y="134.4" width="10" height="13.8" fill="#fff" stroke="#00ff00" stroke-width="1.5"/><path d="M1495 139V139.5 M1495 148.2V176.9" stroke="#00ff00" stroke-width="1.5"/><rect x="1490" y="139.5" width="10" height="8.7" fill="#000" stroke="#00ff00" stroke-width="1.5"/><path d="M1511 133V135.6 M1511 139V141" stroke="#00ff00" stroke-width="1.5"/><rect x="1506" y="135.6" width="10" height="3.4" fill="#000" stroke="#00ff00" stroke-width="1.5"/>
<polyline points="262.0,540.3 295.0,540.3 310.0,545.4 326.0,548.3 345.0,546.0 360.0,540.8 377.0,535.0 390.0,522.5 407.0,522.5 421.0,516.5 439.0,516.5 457.0,502.0 471.0,494.7 503.0,491.0 545.0,491.5 562.0,488.9 569.0,480.6 584.0,447.5 597.0,444.0 632.0,444.5 647.0,455.0 663.0,455.0 676.0,445.3 692.0,439.7 724.5,438.0 745.4,418.8 760.0,409.0 771.0,367.3 779.0,341.2 793.0,268.8 803.4,251.6 824.0,236.1 855.0,232.7 886.0,227.5 917.0,191.3 938.0,160.3 953.0,144.2 982.0,144.2 997.0,163.0 1003.0,179.3 1015.0,227.5 1030.5,231.3 1062.0,190.0 1095.0,190.0 1112.0,224.0 1143.0,249.5 1175.0,202.1 1222.0,196.0 1256.6,188.0 1270.4,188.0 1286.4,166.1 1318.6,161.5 1431.0,162.0 1447.0,170.0 1465.5,150.5 1479.3,126.4 1511.5,125.3" fill="none" stroke="#008000" stroke-width="4" stroke-linejoin="round" />
<rect x="263" y="557.5" width="322" height="4" fill="#ffffff"/>
</g>
<g clip-path="url(#co)">
<path d="M262.4 608.8 C283.6 608.6 360.8 608.2 389.9 607.8 C419.0 607.4 425.8 606.4 437.0 606.4 C448.2 606.4 451.1 607.1 457.3 607.8 C463.5 608.5 463.0 608.9 474.2 610.5 C485.4 612.1 510.7 615.8 524.7 617.2 C538.7 618.6 538.7 618.6 558.4 618.9 C578.1 619.2 609.0 619.2 642.7 618.9 C676.4 618.6 732.6 617.9 760.7 617.2 C788.8 616.5 788.1 614.9 811.3 614.5 C834.5 614.1 858.7 615.1 900.0 614.8 C941.3 614.4 1006.0 612.4 1059.0 612.4 C1112.0 612.4 1142.3 614.7 1217.8 615.0 C1293.3 615.3 1462.8 614.2 1511.8 614.0" fill="none" stroke="#ff0000" stroke-width="1" stroke-linejoin="round" stroke-dasharray="3 3"/>
<path d="M262.4 681.3 C291.5 681.8 398.9 685.2 437.0 684.6 C475.1 684.0 476.4 679.9 491.0 677.9 C505.6 675.9 510.7 673.9 524.7 672.8 C538.8 671.7 536.0 671.2 575.3 671.1 C614.6 671.0 718.6 671.4 760.7 672.2 C802.9 673.1 805.0 675.9 828.2 676.2 C851.4 676.5 835.1 674.0 900.0 673.8 C964.9 673.6 1115.8 674.7 1217.8 674.9 C1319.8 675.1 1462.8 674.9 1511.8 674.9" fill="none" stroke="#008000" stroke-width="1" stroke-linejoin="round" stroke-dasharray="3 3"/>
<path d="M262.4 625.6 C266.3 626.6 303.2 636.4 309.0 637.4 C314.8 638.4 328.3 638.0 332.5 637.4 C336.7 636.8 353.3 633.7 359.5 630.7 C365.7 627.8 400.8 604.6 406.7 602.0 C412.6 599.4 425.0 599.8 430.3 599.7 C435.6 599.6 464.6 599.1 470.8 600.3 C477.0 601.5 498.0 611.5 504.5 613.8 C511.0 616.0 541.6 627.3 548.3 627.3 C555.0 627.3 579.8 615.0 585.4 613.8 C591.0 612.6 611.6 612.7 615.8 613.2 C620.0 613.7 632.4 619.1 636.0 619.9 C639.6 620.7 654.8 622.3 659.6 622.3 C664.4 622.3 687.7 620.2 693.3 619.9 C698.9 619.6 722.8 619.3 727.0 618.9 C731.2 618.5 741.1 616.5 743.9 615.5 C746.7 614.5 756.8 609.6 760.7 607.1 C764.6 604.6 787.2 586.8 791.1 585.2 C795.0 583.6 803.7 586.0 807.9 587.5 C812.1 589.0 835.7 600.9 841.6 603.7 C847.5 606.5 873.8 619.0 878.7 620.6 C883.6 622.2 895.4 622.7 900.0 623.0 C904.6 623.3 930.0 624.1 934.4 624.6 C938.8 625.1 948.8 627.7 953.0 629.3 C957.2 630.9 979.4 641.3 984.7 644.2 C990.0 647.1 1012.5 662.6 1016.5 664.3 C1020.5 666.0 1028.4 665.2 1032.4 664.3 C1036.4 663.4 1060.0 654.1 1064.2 653.2 C1068.4 652.3 1078.7 652.7 1082.7 653.2 C1086.7 653.7 1107.0 659.0 1111.9 659.0 C1116.8 659.0 1135.7 655.3 1141.0 653.2 C1146.3 651.1 1171.2 635.6 1175.4 633.6 C1179.6 631.6 1186.0 631.5 1191.3 629.3 C1196.6 627.1 1232.4 608.6 1239.0 607.1 C1245.6 605.6 1265.5 610.0 1270.8 610.8 C1276.1 611.5 1297.2 614.6 1302.5 616.1 C1307.8 617.6 1329.9 627.9 1334.3 629.3 C1338.7 630.7 1351.5 632.0 1355.5 632.5 C1359.5 633.0 1377.1 634.4 1382.0 635.1 C1386.9 635.8 1409.8 639.9 1413.8 640.4 C1417.8 640.9 1426.8 642.2 1429.7 641.5 C1432.6 640.8 1444.0 636.0 1448.2 632.0 C1452.4 628.0 1476.2 597.0 1480.0 593.8 C1483.8 590.6 1490.5 593.4 1493.2 593.8 C1495.9 594.2 1510.2 598.7 1511.8 599.1" fill="none" stroke="#3399ff" stroke-width="2.6" stroke-linejoin="round" />
</g>
<g clip-path="url(#cr)">
<path d="M263 724.5H1857 M263 753.5H1857" stroke="#2f5f5f" shape-rendering="crispEdges"/>
<polyline points="998.0,761.0 1857.0,731.0" fill="none" stroke="#6b7a2a" stroke-width="1" stroke-linejoin="round" />
<polyline points="1480.0,721.0 1857.0,737.0" fill="none" stroke="#6b7a2a" stroke-width="1" stroke-linejoin="round" />
<polyline points="262.4,735.9 285.3,746.0 295.5,747.0 342.7,734.5 359.5,731.2 376.4,721.0 423.6,716.7 457.3,707.2 504.5,707.6 521.4,711.0 548.3,708.9 568.6,701.5 582.7,699.8 598.9,712.3 615.8,712.3 630.3,719.0 659.6,714.3 679.8,708.9 710.2,708.9 737.1,704.2 760.7,699.8 806.3,696.4 821.4,701.5 841.6,701.5 861.9,699.8 900.0,698.5 934.4,697.1 953.0,736.8 974.2,750.0 998.0,760.7 1013.9,758.0 1047.2,736.8 1064.2,749.0 1080.0,751.7 1094.9,759.6 1122.5,752.7 1143.6,750.0 1158.5,739.5 1175.4,742.1 1191.3,744.8 1207.2,735.3 1239.0,731.5 1286.7,725.2 1302.5,728.9 1318.4,744.8 1350.2,731.5 1368.7,738.4 1382.0,736.8 1397.9,747.4 1429.7,740.5 1461.4,726.2 1480.0,721.0 1495.8,739.5 1511.8,731.5" fill="none" stroke="#878787" stroke-width="1" stroke-linejoin="round" />
<polyline points="934.4,697.3 1480.0,721.0" fill="none" stroke="#ff0000" stroke-width="3" stroke-linejoin="round" />
<polyline points="1318.4,744.0 1398.0,748.0" fill="none" stroke="#ffd000" stroke-width="3" stroke-linejoin="round" />
<circle cx="470.4" cy="707.2" r="1.8" fill="#ff0000"/>
<circle cx="582.7" cy="699.8" r="1.8" fill="#ff0000"/>
<circle cx="806.3" cy="696.4" r="1.8" fill="#ff0000"/>
<circle cx="934.4" cy="697.1" r="1.8" fill="#ff0000"/>
<circle cx="1047.2" cy="736.8" r="1.8" fill="#ff0000"/>
<circle cx="1158.5" cy="739.5" r="1.8" fill="#ff0000"/>
<circle cx="1286.7" cy="725.2" r="1.8" fill="#ff0000"/>
<circle cx="1480" cy="721" r="1.8" fill="#ff0000"/>
<circle cx="294.4" cy="747" r="1.8" fill="#ffd700"/>
<circle cx="598.2" cy="712.3" r="1.8" fill="#ffd700"/>
<circle cx="630.3" cy="719" r="1.8" fill="#ffd700"/>
<circle cx="998" cy="760.7" r="1.8" fill="#ffd700"/>
<circle cx="1094.9" cy="759.6" r="1.8" fill="#ffd700"/>
</g>
<g fill="none" stroke="#fff" stroke-width="1" shape-rendering="crispEdges"><rect x="262.5" y="101.5" width="1595" height="475"/><rect x="262.5" y="578.5" width="1595" height="111"/><rect x="262.5" y="691.5" width="1595" height="74"/></g>
</svg>
<div class="t" style="left:1864px;top:111px;font-size:12.3px;color:#fff;">5178.70</div>
<div class="t" style="left:1864px;top:160px;font-size:12.3px;color:#fff;">5166.70</div>
<div class="t" style="left:1864px;top:209px;font-size:12.3px;color:#fff;">5154.90</div>
<div class="t" style="left:1864px;top:258px;font-size:12.3px;color:#fff;">5142.90</div>
<div class="t" style="left:1864px;top:307px;font-size:12.3px;color:#fff;">5130.90</div>
<div class="t" style="left:1864px;top:356px;font-size:12.3px;color:#fff;">5119.10</div>
<div class="t" style="left:1864px;top:405px;font-size:12.3px;color:#fff;">5107.10</div>
<div class="t" style="left:1864px;top:454px;font-size:12.3px;color:#fff;">5095.30</div>
<div class="t" style="left:1864px;top:503px;font-size:12.3px;color:#fff;">5083.30</div>
<div class="t" style="left:1864px;top:552px;font-size:12.3px;color:#fff;">5071.30</div>
<div class="a" style="left:1858px;top:128px;width:55px;height:14px;background:#fff"></div>
<div class="t" style="left:1862px;top:129px;font-size:13px;color:#000;">5174.18</div>
<div class="a" style="left:1858px;top:362px;width:55px;height:15px;background:#ff0000"></div>
<div class="t" style="left:1862px;top:363px;font-size:13px;color:#000;">5117.21</div>
<div class="a" style="left:1858px;top:523px;width:55px;height:15px;background:#ff0000"></div>
<div class="t" style="left:1862px;top:524px;font-size:13px;color:#000;">5077.92</div>
<div class="t" style="left:1860px;top:581px;font-size:13px;color:#fff;">116.0649</div>
<div class="t" style="left:1860px;top:638px;font-size:13px;color:#fff;">50</div>
<div class="t" style="left:1860px;top:674px;font-size:13px;color:#fff;">5.992</div>
<div class="t" style="left:1860px;top:694px;font-size:13px;color:#fff;">101.4184</div>
<div class="a" style="left:1858px;top:717px;width:16px;height:15px;background:#2f4f4f"></div>
<div class="t" style="left:1860px;top:718px;font-size:13px;color:#a0c0b0;">75</div>
<div class="a" style="left:1858px;top:746px;width:16px;height:15px;background:#2f4f4f"></div>
<div class="t" style="left:1860px;top:747px;font-size:13px;color:#a0c0b0;">50</div>
<div class="t" style="left:1860px;top:750px;font-size:13px;color:#fff;">40.0778</div>
<div class="t" style="left:262px;top:771px;font-size:12.3px;color:#fff;">20 Feb 2026</div>
<div class="a" style="left:263px;top:766px;width:1px;height:4px;background:#fff"></div>
<div class="t" style="left:358px;top:771px;font-size:12.3px;color:#fff;">20 Feb 21:50</div>
<div class="a" style="left:359px;top:766px;width:1px;height:4px;background:#fff"></div>
<div class="t" style="left:454px;top:771px;font-size:12.3px;color:#fff;">20 Feb 22:20</div>
<div class="a" style="left:455px;top:766px;width:1px;height:4px;background:#fff"></div>
<div class="t" style="left:550px;top:771px;font-size:12.3px;color:#fff;">20 Feb 22:50</div>
<div class="a" style="left:551px;top:766px;width:1px;height:4px;background:#fff"></div>
<div class="t" style="left:646px;top:771px;font-size:12.3px;color:#fff;">20 Feb 23:20</div>
<div class="a" style="left:647px;top:766px;width:1px;height:4px;background:#fff"></div>
<div class="t" style="left:742px;top:771px;font-size:12.3px;color:#fff;">20 Feb 23:50</div>
<div class="a" style="left:743px;top:766px;width:1px;height:4px;background:#fff"></div>
<div class="t" style="left:838px;top:771px;font-size:12.3px;color:#fff;">23 Feb 01:25</div>
<div class="a" style="left:839px;top:766px;width:1px;height:4px;background:#fff"></div>
<div class="t" style="left:934px;top:771px;font-size:12.3px;color:#fff;">23 Feb 01:55</div>
<div class="a" style="left:935px;top:766px;width:1px;height:4px;background:#fff"></div>
<div class="t" style="left:1030px;top:771px;font-size:12.3px;color:#fff;">23 Feb 02:25</div>
<div class="a" style="left:1031px;top:766px;width:1px;height:4px;background:#fff"></div>
<div class="t" style="left:1126px;top:771px;font-size:12.3px;color:#fff;">23 Feb 02:55</div>
<div class="a" style="left:1127px;top:766px;width:1px;height:4px;background:#fff"></div>
<div class="t" style="left:1222px;top:771px;font-size:12.3px;color:#fff;">23 Feb 03:25</div>
<div class="a" style="left:1223px;top:766px;width:1px;height:4px;background:#fff"></div>
<div class="t" style="left:1318px;top:771px;font-size:12.3px;color:#fff;">23 Feb 03:55</div>
<div class="a" style="left:1319px;top:766px;width:1px;height:4px;background:#fff"></div>
<div class="t" style="left:1414px;top:771px;font-size:12.3px;color:#fff;">23 Feb 04:25</div>
<div class="a" style="left:1415px;top:766px;width:1px;height:4px;background:#fff"></div>
<div class="t" style="left:1510px;top:771px;font-size:12.3px;color:#fff;">23 Feb 04:55</div>
<div class="a" style="left:1511px;top:766px;width:1px;height:4px;background:#fff"></div>
<svg class="a" style="left:267px;top:107px" width="10" height="7" viewBox="0 0 10 7"><path d="M0 0 H9 L4.5 6 Z" fill="#fff"/></svg>
<div class="t" style="left:282px;top:105px;font-size:12.3px;color:#fff;">XAUUSD,M5</div>
<div class="a" style="left:342px;top:102px;width:15px;height:13px;background:#1e2a38;border:1px solid #8090a8"></div>
<div class="t" style="left:345px;top:101px;font-size:13px;color:#fff;">+</div>
<div class="t" style="left:363px;top:102px;font-size:13px;color:#ffff00;">MT4<span style="letter-spacing:2.6px;font-size:13px">统计每一笔交易</span></div>
<div class="a" style="left:273px;top:122px;width:90px;height:20px;background:#33cc33;border:1px solid #9aaac0"></div>
<div class="t" style="left:303px;top:124px;font-size:15px;color:#000;">Buy</div>
<svg class="a" style="left:1526px;top:101px" width="20" height="8" viewBox="0 0 20 8"><path d="M0 0 H19 L9.5 7 Z" fill="#8a9ab0"/></svg>
<div class="t" style="left:757px;top:252px;font-size:15px;color:#ffff00;letter-spacing:3px;font-weight:300">平多</div>
<div class="t" style="left:1445px;top:107px;font-size:15px;color:#ffff00;letter-spacing:3px;font-weight:300">平多</div>
<div class="t" style="left:527px;top:512px;font-size:15px;color:#ff0000;transform:rotate(-28deg);font-weight:300">多</div>
<div class="t" style="left:623px;top:477px;font-size:15px;color:#ff0000;transform:rotate(-28deg);font-weight:300">多</div>
<div class="t" style="left:1007px;top:322px;font-size:15px;color:#ff0000;transform:rotate(-28deg);font-weight:300">多</div>
<div class="t" style="left:1087px;top:300px;font-size:15px;color:#ff0000;transform:rotate(-28deg);font-weight:300">多</div>
<div class="t" style="left:614px;top:537px;font-size:15px;color:#ff0000;font-weight:300;letter-spacing:1px">多损</div>
<div class="t" style="left:999px;top:436px;font-size:15px;color:#ff0000;font-weight:300;letter-spacing:1px">多损</div>
<div class="t" style="left:1078px;top:409px;font-size:15px;color:#ff0000;font-weight:300;letter-spacing:1px">多损</div>
<div class="t" style="left:519px;top:563px;font-size:15px;color:#ff0000;font-weight:300;letter-spacing:1px">多损</div>
<div class="t" style="left:267px;top:583px;font-size:12.9px;color:#fff;">OB/OS BOSS [8&gt;18&gt;63*1.60*1.60] 96.7559 81.4648 18.5352</div>
<div class="t" style="left:267px;top:696px;font-size:13px;color:#fff;">RSI 68.0154</div>
<div class="a" style="left:3px;top:789px;width:1910px;height:1px;background:#a0a0a0"></div>
<div class="a" style="left:3px;top:790px;width:1910px;height:1px;background:#fff"></div>
<svg class="a" style="left:9px;top:797px" width="10" height="10" viewBox="0 0 10 10"><path d="M1 1 L9 9 M9 1 L1 9" stroke="#000" stroke-width="1.6"/></svg>
<div class="a" style="left:6px;top:813px;width:16px;height:58px;background:#b3c9e3"></div>
<div class="a" style="left:23px;top:795px;width:1890px;height:76px;background:#fff;border-top:1px solid #a0a0a0;border-left:1px solid #a0a0a0"></div>
<div class="a" style="left:24px;top:847px;width:1889px;height:24px;background:#ebebeb"></div>
<div class="a" style="left:24px;top:822px;width:1889px;height:1px;background:#d5d5d5"></div>
<div class="a" style="left:24px;top:846px;width:1889px;height:1px;background:#d5d5d5"></div>
<div class="a" style="left:190px;top:796px;width:1px;height:75px;background:#d5d5d5"></div>
<div class="a" style="left:475px;top:796px;width:1px;height:75px;background:#d5d5d5"></div>
<div class="a" style="left:604px;top:796px;width:1px;height:75px;background:#d5d5d5"></div>
<div class="a" style="left:707px;top:796px;width:1px;height:75px;background:#d5d5d5"></div>
<div class="a" style="left:837px;top:796px;width:1px;height:75px;background:#d5d5d5"></div>
<div class="a" style="left:966px;top:796px;width:1px;height:75px;background:#d5d5d5"></div>
<div class="a" style="left:1095px;top:796px;width:1px;height:75px;background:#d5d5d5"></div>
<div class="a" style="left:1223px;top:796px;width:1px;height:75px;background:#d5d5d5"></div>
<div class="a" style="left:1508px;top:796px;width:1px;height:75px;background:#d5d5d5"></div>
<div class="a" style="left:1638px;top:796px;width:1px;height:75px;background:#d5d5d5"></div>
<div class="a" style="left:1766px;top:796px;width:1px;height:75px;background:#d5d5d5"></div>
<div class="a" style="left:1096px;top:823px;width:126px;height:23px;background:#5ef05e"></div>
<div class="a" style="left:1096px;top:848px;width:126px;height:23px;background:#5ef05e"></div>
<div class="t" style="left:30px;top:802px;font-size:15px;color:#000;">订单</div>
<div class="t" style="left:72px;top:802px;font-size:9px;color:#666;">/</div>
<div class="t" style="right:1443px;top:802px;font-size:15px;color:#000">时间</div>
<div class="t" style="right:1313px;top:802px;font-size:15px;color:#000">类型</div>
<div class="t" style="right:1210px;top:802px;font-size:15px;color:#000">手数</div>
<div class="t" style="right:1081px;top:802px;font-size:15px;color:#000">交易品种</div>
<div class="t" style="right:952px;top:802px;font-size:15px;color:#000">价格</div>
<div class="t" style="right:823px;top:802px;font-size:15px;color:#000">止损</div>
<div class="t" style="right:695px;top:802px;font-size:15px;color:#000">止盈</div>
<div class="t" style="right:410px;top:802px;font-size:15px;color:#000">时间</div>
<div class="t" style="right:280px;top:802px;font-size:15px;color:#000">价格</div>
<div class="t" style="right:151px;top:802px;font-size:15px;color:#000">库存费</div>
<div class="t" style="right:3px;top:802px;font-size:15px;color:#000">获利</div>
<svg class="a" style="left:27px;top:825px" width="20" height="22" viewBox="0 0 20 22"><path d="M2 1 h9 l4 4 v13 H2 Z" fill="#fff" stroke="#777" stroke-width="1.2"/><path d="M11 1 v4 h4" fill="none" stroke="#777"/><circle cx="14" cy="16" r="4.3" fill="#e04a1a"/></svg>
<div class="t" style="left:51px;top:828px;font-size:16px;color:#000;">127250304</div>
<div class="t" style="right:1443px;top:828px;font-size:16px;color:#000">2026.02.23 04:49:48</div>
<div class="t" style="right:1313px;top:828px;font-size:16px;color:#000">sell</div>
<div class="t" style="right:1210px;top:828px;font-size:16px;color:#000">0.01</div>
<div class="t" style="right:1081px;top:828px;font-size:16px;color:#000">xauusd</div>
<div class="t" style="right:952px;top:828px;font-size:16px;color:#000">5171.35</div>
<div class="t" style="right:823px;top:828px;font-size:16px;color:#000">5176.06</div>
<div class="t" style="right:695px;top:828px;font-size:16px;color:#000">5164.81</div>
<div class="t" style="right:410px;top:828px;font-size:16px;color:#000">2026.02.23 04:51:22</div>
<div class="t" style="right:280px;top:828px;font-size:16px;color:#000">5164.81</div>
<div class="t" style="right:151px;top:828px;font-size:16px;color:#000">0.00</div>
<div class="t" style="right:3px;top:828px;font-size:16px;color:#000">6.54</div>
<svg class="a" style="left:27px;top:850px" width="20" height="22" viewBox="0 0 20 22"><path d="M2 1 h9 l4 4 v13 H2 Z" fill="#fff" stroke="#777" stroke-width="1.2"/><path d="M11 1 v4 h4" fill="none" stroke="#777"/><circle cx="14" cy="16" r="4.3" fill="#2a8ae0"/></svg>
<div class="t" style="left:51px;top:853px;font-size:16px;color:#000;">127251035</div>
<div class="t" style="right:1443px;top:853px;font-size:16px;color:#000">2026.02.23 04:52:08</div>
<div class="t" style="right:1313px;top:853px;font-size:16px;color:#000">buy</div>
<div class="t" style="right:1210px;top:853px;font-size:16px;color:#000">0.40</div>
<div class="t" style="right:1081px;top:853px;font-size:16px;color:#000">xauusd</div>
<div class="t" style="right:952px;top:853px;font-size:16px;color:#000">5167.39</div>
<div class="t" style="right:823px;top:853px;font-size:16px;color:#000">5163.87</div>
<div class="t" style="right:695px;top:853px;font-size:16px;color:#000">5173.95</div>
<div class="t" style="right:410px;top:853px;font-size:16px;color:#000">2026.02.23 04:56:09</div>
<div class="t" style="right:280px;top:853px;font-size:16px;color:#000">5173.95</div>
<div class="t" style="right:151px;top:853px;font-size:16px;color:#000">0.00</div>
<div class="t" style="right:3px;top:853px;font-size:16px;color:#000">262.40</div>
<svg class="a" style="left:0;top:0;pointer-events:none" width="1913" height="871">
<text x="123" y="135" text-anchor="middle" transform="rotate(-34 123 123)" font-family="Liberation Sans" font-weight="bold" font-size="36" fill="rgba(255,255,255,0.13)" stroke="rgba(120,120,120,0.28)" stroke-width="0.9" stroke-linejoin="round">EAHub.cn</text>
<text x="373" y="135" text-anchor="middle" transform="rotate(-34 373 123)" font-family="Liberation Sans" font-weight="bold" font-size="36" fill="rgba(255,255,255,0.13)" stroke="rgba(120,120,120,0.28)" stroke-width="0.9" stroke-linejoin="round">EAHub.cn</text>
<text x="623" y="135" text-anchor="middle" transform="rotate(-34 623 123)" font-family="Liberation Sans" font-weight="bold" font-size="36" fill="rgba(255,255,255,0.13)" stroke="rgba(120,120,120,0.28)" stroke-width="0.9" stroke-linejoin="round">EAHub.cn</text>
<text x="873" y="135" text-anchor="middle" transform="rotate(-34 873 123)" font-family="Liberation Sans" font-weight="bold" font-size="36" fill="rgba(255,255,255,0.13)" stroke="rgba(120,120,120,0.28)" stroke-width="0.9" stroke-linejoin="round">EAHub.cn</text>
<text x="1123" y="135" text-anchor="middle" transform="rotate(-34 1123 123)" font-family="Liberation Sans" font-weight="bold" font-size="36" fill="rgba(255,255,255,0.13)" stroke="rgba(120,120,120,0.28)" stroke-width="0.9" stroke-linejoin="round">EAHub.cn</text>
<text x="1373" y="135" text-anchor="middle" transform="rotate(-34 1373 123)" font-family="Liberation Sans" font-weight="bold" font-size="36" fill="rgba(255,255,255,0.13)" stroke="rgba(120,120,120,0.28)" stroke-width="0.9" stroke-linejoin="round">EAHub.cn</text>
<text x="1623" y="135" text-anchor="middle" transform="rotate(-34 1623 123)" font-family="Liberation Sans" font-weight="bold" font-size="36" fill="rgba(255,255,255,0.13)" stroke="rgba(120,120,120,0.28)" stroke-width="0.9" stroke-linejoin="round">EAHub.cn</text>
<text x="1873" y="135" text-anchor="middle" transform="rotate(-34 1873 123)" font-family="Liberation Sans" font-weight="bold" font-size="36" fill="rgba(255,255,255,0.13)" stroke="rgba(120,120,120,0.28)" stroke-width="0.9" stroke-linejoin="round">EAHub.cn</text>
<text x="123" y="385" text-anchor="middle" transform="rotate(-34 123 373)" font-family="Liberation Sans" font-weight="bold" font-size="36" fill="rgba(255,255,255,0.13)" stroke="rgba(120,120,120,0.28)" stroke-width="0.9" stroke-linejoin="round">EAHub.cn</text>
<text x="373" y="385" text-anchor="middle" transform="rotate(-34 373 373)" font-family="Liberation Sans" font-weight="bold" font-size="36" fill="rgba(255,255,255,0.13)" stroke="rgba(120,120,120,0.28)" stroke-width="0.9" stroke-linejoin="round">EAHub.cn</text>
<text x="623" y="385" text-anchor="middle" transform="rotate(-34 623 373)" font-family="Liberation Sans" font-weight="bold" font-size="36" fill="rgba(255,255,255,0.13)" stroke="rgba(120,120,120,0.28)" stroke-width="0.9" stroke-linejoin="round">EAHub.cn</text>
<text x="873" y="385" text-anchor="middle" transform="rotate(-34 873 373)" font-family="Liberation Sans" font-weight="bold" font-size="36" fill="rgba(255,255,255,0.13)" stroke="rgba(120,120,120,0.28)" stroke-width="0.9" stroke-linejoin="round">EAHub.cn</text>
<text x="1123" y="385" text-anchor="middle" transform="rotate(-34 1123 373)" font-family="Liberation Sans" font-weight="bold" font-size="36" fill="rgba(255,255,255,0.13)" stroke="rgba(120,120,120,0.28)" stroke-width="0.9" stroke-linejoin="round">EAHub.cn</text>
<text x="1373" y="385" text-anchor="middle" transform="rotate(-34 1373 373)" font-family="Liberation Sans" font-weight="bold" font-size="36" fill="rgba(255,255,255,0.13)" stroke="rgba(120,120,120,0.28)" stroke-width="0.9" stroke-linejoin="round">EAHub.cn</text>
<text x="1623" y="385" text-anchor="middle" transform="rotate(-34 1623 373)" font-family="Liberation Sans" font-weight="bold" font-size="36" fill="rgba(255,255,255,0.13)" stroke="rgba(120,120,120,0.28)" stroke-width="0.9" stroke-linejoin="round">EAHub.cn</text>
<text x="1873" y="385" text-anchor="middle" transform="rotate(-34 1873 373)" font-family="Liberation Sans" font-weight="bold" font-size="36" fill="rgba(255,255,255,0.13)" stroke="rgba(120,120,120,0.28)" stroke-width="0.9" stroke-linejoin="round">EAHub.cn</text>
<text x="123" y="635" text-anchor="middle" transform="rotate(-34 123 623)" font-family="Liberation Sans" font-weight="bold" font-size="36" fill="rgba(255,255,255,0.13)" stroke="rgba(120,120,120,0.28)" stroke-width="0.9" stroke-linejoin="round">EAHub.cn</text>
<text x="373" y="635" text-anchor="middle" transform="rotate(-34 373 623)" font-family="Liberation Sans" font-weight="bold" font-size="36" fill="rgba(255,255,255,0.13)" stroke="rgba(120,120,120,0.28)" stroke-width="0.9" stroke-linejoin="round">EAHub.cn</text>
<text x="623" y="635" text-anchor="middle" transform="rotate(-34 623 623)" font-family="Liberation Sans" font-weight="bold" font-size="36" fill="rgba(255,255,255,0.13)" stroke="rgba(120,120,120,0.28)" stroke-width="0.9" stroke-linejoin="round">EAHub.cn</text>
<text x="873" y="635" text-anchor="middle" transform="rotate(-34 873 623)" font-family="Liberation Sans" font-weight="bold" font-size="36" fill="rgba(255,255,255,0.13)" stroke="rgba(120,120,120,0.28)" stroke-width="0.9" stroke-linejoin="round">EAHub.cn</text>
<text x="1123" y="635" text-anchor="middle" transform="rotate(-34 1123 623)" font-family="Liberation Sans" font-weight="bold" font-size="36" fill="rgba(255,255,255,0.13)" stroke="rgba(120,120,120,0.28)" stroke-width="0.9" stroke-linejoin="round">EAHub.cn</text>
<text x="1373" y="635" text-anchor="middle" transform="rotate(-34 1373 623)" font-family="Liberation Sans" font-weight="bold" font-size="36" fill="rgba(255,255,255,0.13)" stroke="rgba(120,120,120,0.28)" stroke-width="0.9" stroke-linejoin="round">EAHub.cn</text>
<text x="1623" y="635" text-anchor="middle" transform="rotate(-34 1623 623)" font-family="Liberation Sans" font-weight="bold" font-size="36" fill="rgba(255,255,255,0.13)" stroke="rgba(120,120,120,0.28)" stroke-width="0.9" stroke-linejoin="round">EAHub.cn</text>
<text x="1873" y="635" text-anchor="middle" transform="rotate(-34 1873 623)" font-family="Liberation Sans" font-weight="bold" font-size="36" fill="rgba(255,255,255,0.13)" stroke="rgba(120,120,120,0.28)" stroke-width="0.9" stroke-linejoin="round">EAHub.cn</text>
<text x="123" y="885" text-anchor="middle" transform="rotate(-34 123 873)" font-family="Liberation Sans" font-weight="bold" font-size="36" fill="rgba(255,255,255,0.13)" stroke="rgba(120,120,120,0.28)" stroke-width="0.9" stroke-linejoin="round">EAHub.cn</text>
<text x="373" y="885" text-anchor="middle" transform="rotate(-34 373 873)" font-family="Liberation Sans" font-weight="bold" font-size="36" fill="rgba(255,255,255,0.13)" stroke="rgba(120,120,120,0.28)" stroke-width="0.9" stroke-linejoin="round">EAHub.cn</text>
<text x="623" y="885" text-anchor="middle" transform="rotate(-34 623 873)" font-family="Liberation Sans" font-weight="bold" font-size="36" fill="rgba(255,255,255,0.13)" stroke="rgba(120,120,120,0.28)" stroke-width="0.9" stroke-linejoin="round">EAHub.cn</text>
<text x="873" y="885" text-anchor="middle" transform="rotate(-34 873 873)" font-family="Liberation Sans" font-weight="bold" font-size="36" fill="rgba(255,255,255,0.13)" stroke="rgba(120,120,120,0.28)" stroke-width="0.9" stroke-linejoin="round">EAHub.cn</text>
<text x="1123" y="885" text-anchor="middle" transform="rotate(-34 1123 873)" font-family="Liberation Sans" font-weight="bold" font-size="36" fill="rgba(255,255,255,0.13)" stroke="rgba(120,120,120,0.28)" stroke-width="0.9" stroke-linejoin="round">EAHub.cn</text>
<text x="1373" y="885" text-anchor="middle" transform="rotate(-34 1373 873)" font-family="Liberation Sans" font-weight="bold" font-size="36" fill="rgba(255,255,255,0.13)" stroke="rgba(120,120,120,0.28)" stroke-width="0.9" stroke-linejoin="round">EAHub.cn</text>
<text x="1623" y="885" text-anchor="middle" transform="rotate(-34 1623 873)" font-family="Liberation Sans" font-weight="bold" font-size="36" fill="rgba(255,255,255,0.13)" stroke="rgba(120,120,120,0.28)" stroke-width="0.9" stroke-linejoin="round">EAHub.cn</text>
<text x="1873" y="885" text-anchor="middle" transform="rotate(-34 1873 873)" font-family="Liberation Sans" font-weight="bold" font-size="36" fill="rgba(255,255,255,0.13)" stroke="rgba(120,120,120,0.28)" stroke-width="0.9" stroke-linejoin="round">EAHub.cn</text>
</svg>
</body></html>
